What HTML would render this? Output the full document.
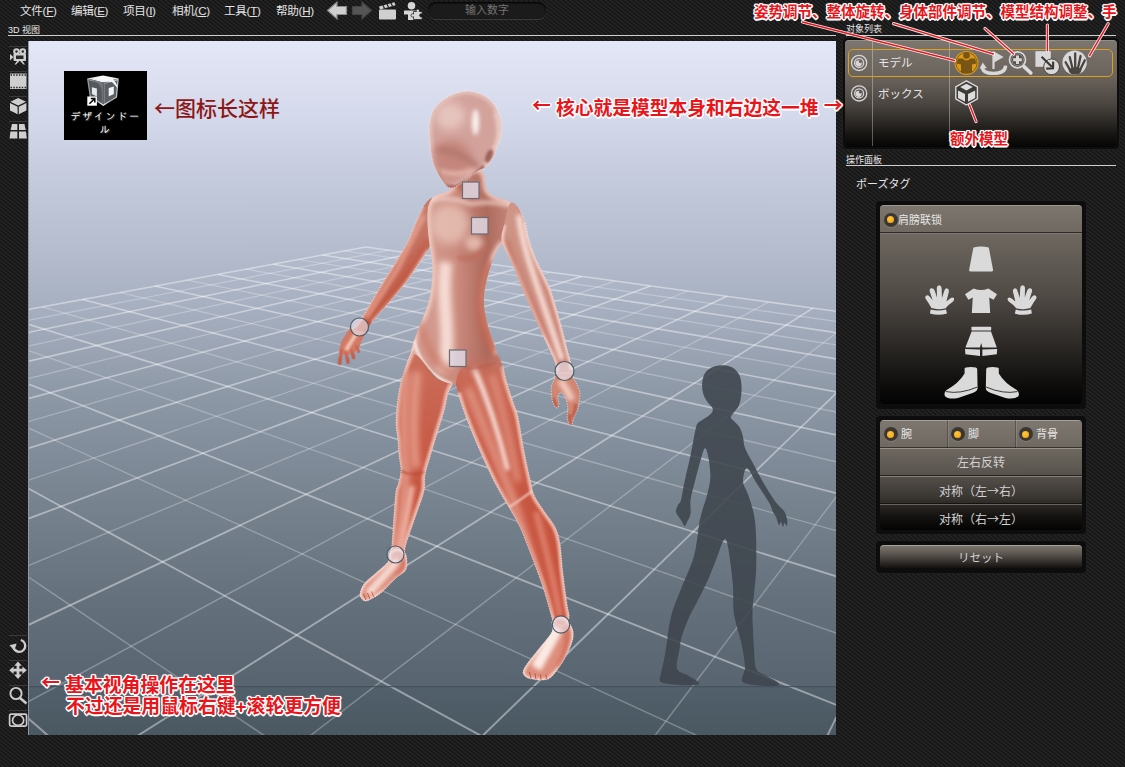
<!DOCTYPE html>
<html lang="zh">
<head>
<meta charset="utf-8">
<title>3D 视图</title>
<style>
html,body{margin:0;padding:0}
body{width:1125px;height:767px;overflow:hidden;position:relative;
 font-family:"Liberation Sans","Noto Sans CJK SC",sans-serif;
 background-color:#1b1b1b;}
.abs{position:absolute}
.menu{position:absolute;top:3px;height:16px;line-height:16px;font-size:11.6px;letter-spacing:-.3px;color:#e4e4e4;white-space:nowrap}
.menu u{text-decoration:underline}
.lbl{position:absolute;font-size:9px;color:#e8e8e8;line-height:10px;white-space:nowrap}
.hline{position:absolute;height:1px;background:#cfcfcf}
#vp{position:absolute;left:28px;top:41px;width:808px;height:694px;overflow:hidden;
 background:linear-gradient(to bottom,#e4e7f7 0px,#d3d8ea 80px,#c1c8da 150px,#b4bccd 210px,#a7b0c0 265px,#8e99a8 350px,#77838f 460px,#64717d 560px,#586571 645px,#52606b 646px,#4a5862 694px);}
#vp svg{position:absolute;left:0;top:0}
.gM{stroke:#fff;stroke-opacity:.42}
.gm{stroke:#fff;stroke-opacity:.27}
.red{position:absolute;color:#e9151b;font-weight:bold;white-space:nowrap;
 font-family:"Liberation Sans","Noto Sans CJK SC",sans-serif;
 text-shadow:-1px -1px 0 #fff,1px -1px 0 #fff,-1px 1px 0 #fff,1px 1px 0 #fff,0 -1.5px 0 #fff,0 1.5px 0 #fff,-1.5px 0 0 #fff,1.5px 0 0 #fff,0 0 2.5px #fff;}
.panel{position:absolute;border-radius:4px;}
.frame{position:absolute;background:#0d0d0d;border-radius:4px;box-shadow:0 0 0 1px #1f1f1f}
.btn{position:absolute;left:0;width:202px;text-align:center;color:#d2d2d2;font-size:12px;box-sizing:border-box;border-top:1px solid rgba(255,255,255,.28);border-bottom:1px solid rgba(0,0,0,.55)}
.radio{position:absolute;width:14px;height:14px;border-radius:50%;background:#3b3632;box-shadow:0 1px 0 rgba(255,255,255,.12)}
.radio:after{content:"";position:absolute;left:3.5px;top:3.5px;width:7px;height:7px;border-radius:50%;background:radial-gradient(circle at 40% 35%,#ffc63a,#f0a010)}
.ar{font-family:"Noto Sans CJK SC","Noto Sans CJK JP",sans-serif}
.red .ar{position:relative;top:-2px}
.ptxt{position:absolute;color:#e6e6e6;font-size:11px;line-height:14px;white-space:nowrap}
</style>
</head>
<body>
<svg class="abs" style="left:0;top:0" width="1125" height="767">
 <defs><pattern id="cf" width="5" height="4" patternUnits="userSpaceOnUse">
  <rect width="5" height="4" fill="#151515"/>
  <g stroke="#242424" stroke-width="1.55"><path d="M-5 -4L10 8"/><path d="M0 -4L15 8"/><path d="M-10 -4L5 8"/></g>
 </pattern></defs>
 <rect width="1125" height="767" fill="url(#cf)"/>
</svg>

<!-- ===== menu bar ===== -->
<div class="menu" style="left:20px">文件(<u>F</u>)</div>
<div class="menu" style="left:71px">编辑(<u>E</u>)</div>
<div class="menu" style="left:123px">项目(<u>I</u>)</div>
<div class="menu" style="left:172px">相机(<u>C</u>)</div>
<div class="menu" style="left:224px">工具(<u>T</u>)</div>
<div class="menu" style="left:276px">帮助(<u>H</u>)</div>

<!-- toolbar icons -->
<svg class="abs" style="left:324px;top:0" width="104" height="22" viewBox="324 0 104 22">
 <path d="M327.5 10.5 L337 2 L337 6.5 L346.5 6.5 L346.5 14.5 L337 14.5 L337 19 Z" fill="#cfcfcf" stroke="#8a8a8a" stroke-width="1.2"/>
 <path d="M371.5 10.5 L362 2 L362 6.5 L352.5 6.5 L352.5 14.5 L362 14.5 L362 19 Z" fill="#555" stroke="#444" stroke-width="1.2"/>
 <g fill="#d0d0d0">
  <path d="M379 6.5 L394.5 2.2 L395.5 5.2 L380 9.5 Z"/>
  <rect x="379" y="9.5" width="17" height="10" rx="1"/>
 </g>
 <g stroke="#222" stroke-width="1.2"><line x1="383" y1="5.2" x2="384.5" y2="8.4"/><line x1="387" y1="4.1" x2="388.5" y2="7.3"/><line x1="391" y1="3" x2="392.5" y2="6.2"/></g>
 <g fill="#d6d6d6">
  <circle cx="411.5" cy="5.8" r="3.8"/>
  <path d="M404 10.5 h15 v4 h-4.5 v5.5 h-6.5 v-5.5 h-4 Z"/>
  <path d="M413.5 11.5 h3 a1.6 1.6 0 1 1 2.6 0 h3 v2.6 a1.6 1.6 0 1 0 0 2.6 v2.8 h-8.6 v-2.8 a1.6 1.6 0 1 1 0 -2.6 Z" stroke="#222" stroke-width=".8"/>
 </g>
</svg>
<div class="abs" style="left:428px;top:2px;width:118px;height:17px;border-radius:8px;background:#1b1b1b;box-shadow:inset 0 1px 2px #000,0 1px 0 #3a3a3a;color:#747474;font-size:11px;line-height:17px;text-align:center">输入数字</div>

<!-- 3D view label -->
<div class="lbl" style="left:8px;top:25px">3D 视图</div>
<div class="hline" style="left:8px;top:35px;width:828px"></div>

<!-- ===== viewport ===== -->
<div id="vp">
<svg width="808" height="694" viewBox="28 41 808 694">
 <defs>
  <filter id="b1" filterUnits="userSpaceOnUse" x="28" y="41" width="808" height="694"><feGaussianBlur stdDeviation="1"/></filter>
  <filter id="b2" filterUnits="userSpaceOnUse" x="28" y="41" width="808" height="694"><feGaussianBlur stdDeviation="2"/></filter>
  <filter id="b3" filterUnits="userSpaceOnUse" x="28" y="41" width="808" height="694"><feGaussianBlur stdDeviation="3.2"/></filter>
  <filter id="b5" filterUnits="userSpaceOnUse" x="28" y="41" width="808" height="694"><feGaussianBlur stdDeviation="5"/></filter>
  <linearGradient id="skin" gradientUnits="userSpaceOnUse" x1="0" y1="190" x2="0" y2="640">
   <stop offset="0" stop-color="#d09c90"/><stop offset=".2" stop-color="#cc8575"/><stop offset=".4" stop-color="#c96b58"/><stop offset=".6" stop-color="#c75843"/><stop offset="1" stop-color="#c6503a"/>
  </linearGradient>
  <linearGradient id="torsoG" gradientUnits="userSpaceOnUse" x1="415" y1="0" x2="505" y2="0">
   <stop offset="0" stop-color="#d6a399"/><stop offset=".45" stop-color="#cc8c7f"/><stop offset=".8" stop-color="#ad6a5d"/><stop offset="1" stop-color="#c08072"/>
  </linearGradient>
  <linearGradient id="fadeR" gradientUnits="userSpaceOnUse" x1="0" y1="352" x2="0" y2="376"><stop offset="0" stop-color="#000"/><stop offset="1" stop-color="#fff"/></linearGradient>
  <mask id="mR" maskUnits="userSpaceOnUse" x="28" y="41" width="808" height="694"><rect x="28" y="41" width="808" height="694" fill="url(#fadeR)"/></mask>
  <linearGradient id="larmG" gradientUnits="userSpaceOnUse" x1="428" y1="210" x2="360" y2="326"><stop offset="0" stop-color="#c67b6c"/><stop offset=".5" stop-color="#c2624f"/><stop offset="1" stop-color="#bf5540"/></linearGradient>
  <linearGradient id="rarmG" gradientUnits="userSpaceOnUse" x1="512" y1="210" x2="562" y2="366"><stop offset="0" stop-color="#cf9688"/><stop offset="1" stop-color="#c67c6d"/></linearGradient>
  <clipPath id="cHead"><path d="M465.7 91.0C471.4 90.5 477.0 92.3 481.4 94.1C485.8 95.9 489.3 98.5 492.3 101.9C495.3 105.3 497.8 110.2 499.4 114.4C501.0 118.6 501.6 122.8 501.7 127.0C501.8 131.2 501.1 135.8 500.2 139.5C499.3 143.2 497.2 146.2 496.2 149.0C495.1 151.8 495.6 153.0 493.9 156.0C492.2 159.0 488.6 164.5 486.0 167.0C483.4 169.5 481.6 168.6 478.2 170.8C474.8 173.0 469.6 177.5 465.7 180.2C461.8 182.9 457.4 185.9 454.8 187.2C452.2 188.5 451.6 188.4 450.0 188.0C448.4 187.6 447.2 187.0 445.4 184.9C443.6 182.8 441.0 178.9 439.0 175.5C437.0 172.1 435.0 168.7 433.6 164.5C432.2 160.3 431.3 155.6 430.5 150.4C429.7 145.2 429.1 138.1 429.0 133.2C428.9 128.2 428.8 124.9 429.7 120.7C430.6 116.5 431.5 112.1 434.4 108.2C437.3 104.3 441.8 100.1 447.0 97.2C452.2 94.3 460.0 91.5 465.7 91.0Z"/></clipPath>
  <clipPath id="cTorso"><path d="M456.0 184.0C452.2 187.7 450.3 190.2 447.0 192.0C443.7 193.8 438.7 193.7 436.0 195.0C433.3 196.3 432.3 197.8 431.0 200.0C429.7 202.2 428.6 204.3 428.0 208.0C427.4 211.7 427.4 217.3 427.5 222.0C427.6 226.7 428.1 231.7 428.5 236.0C428.9 240.3 429.3 242.7 430.0 248.0C430.7 253.3 432.2 261.7 432.5 268.0C432.8 274.3 432.1 280.5 431.5 286.0C430.9 291.5 430.2 296.2 429.0 301.0C427.8 305.8 425.8 310.2 424.0 315.0C422.2 319.8 419.8 325.2 418.0 330.0C416.2 334.8 414.1 340.3 413.0 344.0C411.9 347.7 410.5 349.8 411.5 352.0C412.5 354.2 416.1 354.2 419.0 357.0C421.9 359.8 425.7 365.3 429.0 369.0C432.3 372.7 435.2 376.5 439.0 379.0C442.8 381.5 446.8 382.5 452.0 384.0C457.2 385.5 462.3 387.5 470.0 388.0C477.7 388.5 492.1 388.3 498.0 387.0C503.9 385.7 504.7 383.2 505.5 380.0C506.3 376.8 504.3 372.3 503.0 368.0C501.7 363.7 499.3 359.0 497.5 354.0C495.7 349.0 493.9 344.0 492.0 338.0C490.1 332.0 487.3 325.0 486.0 318.0C484.7 311.0 483.3 304.3 484.0 296.0C484.7 287.7 487.3 276.3 490.0 268.0C492.7 259.7 496.3 250.7 500.0 246.0C503.7 241.3 508.3 243.0 512.0 240.0C515.7 237.0 520.7 232.2 522.0 228.0C523.3 223.8 522.0 219.3 520.0 215.0C518.0 210.7 514.0 205.0 510.0 202.0C506.0 199.0 499.8 199.0 496.0 197.0C492.2 195.0 489.2 194.2 487.0 190.0C484.8 185.8 485.8 175.3 483.0 172.0C480.2 168.7 474.5 168.0 470.0 170.0C465.5 172.0 459.8 180.3 456.0 184.0Z"/></clipPath>
  <clipPath id="cLarm"><path d="M431.0 198.0C429.0 198.7 425.4 203.2 423.0 207.0C420.6 210.8 419.0 215.3 416.5 221.0C414.0 226.7 411.2 234.5 408.0 241.0C404.8 247.5 401.3 252.8 397.0 260.0C392.7 267.2 387.7 274.7 382.0 284.0C376.3 293.3 367.7 308.7 363.0 316.0C358.3 323.3 356.0 325.0 354.0 328.0C352.0 331.0 350.3 332.3 351.0 334.0C351.7 335.7 355.7 337.8 358.0 338.0C360.3 338.2 362.7 337.7 365.0 335.0C367.3 332.3 367.5 328.0 372.0 322.0C376.5 316.0 386.2 305.8 392.0 299.0C397.8 292.2 402.3 287.2 407.0 281.0C411.7 274.8 416.5 267.2 420.0 262.0C423.5 256.8 425.8 254.3 428.0 250.0C430.2 245.7 431.8 241.8 433.0 236.0C434.2 230.2 434.7 220.5 435.0 215.0C435.3 209.5 435.7 205.8 435.0 203.0C434.3 200.2 433.0 197.3 431.0 198.0Z"/></clipPath>
  <clipPath id="cRarm"><path d="M510.0 203.0C507.5 205.8 505.3 218.5 504.0 225.0C502.7 231.5 500.3 234.8 502.0 242.0C503.7 249.2 509.7 258.0 514.0 268.0C518.3 278.0 523.3 291.0 528.0 302.0C532.7 313.0 537.7 324.3 542.0 334.0C546.3 343.7 551.5 353.7 554.0 360.0C556.5 366.3 556.0 368.7 557.0 372.0C558.0 375.3 558.0 378.7 560.0 380.0C562.0 381.3 567.0 381.7 569.0 380.0C571.0 378.3 571.8 373.3 572.0 370.0C572.2 366.7 571.0 364.2 570.0 360.0C569.0 355.8 567.4 350.5 566.0 345.0C564.6 339.5 563.2 333.2 561.5 327.0C559.8 320.8 557.8 314.2 556.0 308.0C554.2 301.8 552.5 295.3 550.5 290.0C548.5 284.7 546.5 281.3 544.0 276.0C541.5 270.7 538.0 264.0 535.5 258.0C533.0 252.0 530.8 246.0 529.0 240.0C527.2 234.0 526.7 227.3 525.0 222.0C523.3 216.7 521.5 211.2 519.0 208.0C516.5 204.8 512.5 200.2 510.0 203.0Z"/></clipPath>
  <clipPath id="cLleg"><path d="M413.0 349.0C410.7 351.3 407.3 361.8 405.0 369.0C402.7 376.2 400.5 383.3 399.0 392.0C397.5 400.7 396.2 413.0 396.0 421.0C395.8 429.0 397.5 434.3 398.0 440.0C398.5 445.7 398.5 449.8 399.0 455.0C399.5 460.2 401.2 466.0 401.0 471.0C400.8 476.0 398.8 481.7 398.0 485.0C397.2 488.3 396.7 486.0 396.0 491.0C395.3 496.0 394.7 506.2 394.0 515.0C393.3 523.8 392.7 537.2 392.0 544.0C391.3 550.8 389.3 553.0 390.0 556.0C390.7 559.0 393.8 561.7 396.0 562.0C398.2 562.3 401.3 561.0 403.0 558.0C404.7 555.0 403.8 551.2 406.0 544.0C408.2 536.8 413.0 523.8 416.0 515.0C419.0 506.2 422.5 497.7 424.0 491.0C425.5 484.3 424.0 480.7 425.0 475.0C426.0 469.3 428.2 463.3 430.0 457.0C431.8 450.7 433.7 444.7 436.0 437.0C438.3 429.3 442.0 418.3 444.0 411.0C446.0 403.7 446.7 397.5 448.0 393.0C449.3 388.5 453.7 386.3 452.0 384.0C450.3 381.7 441.8 381.5 438.0 379.0C434.2 376.5 432.2 373.0 429.0 369.0C425.8 365.0 421.7 358.3 419.0 355.0C416.3 351.7 415.3 346.7 413.0 349.0Z"/></clipPath>
  <clipPath id="cRleg"><path d="M456.0 381.0C456.5 376.8 458.7 371.8 461.0 368.0C463.3 364.2 466.2 361.0 470.0 358.0C473.8 355.0 479.5 351.5 484.0 350.0C488.5 348.5 493.8 346.3 497.0 349.0C500.2 351.7 501.5 360.8 503.0 366.0C504.5 371.2 504.3 374.0 506.0 380.0C507.7 386.0 511.0 395.8 513.0 402.0C515.0 408.2 516.2 408.8 518.0 417.0C519.8 425.2 522.0 440.7 524.0 451.0C526.0 461.3 528.3 471.7 530.0 479.0C531.7 486.3 531.7 489.7 534.0 495.0C536.3 500.3 540.5 505.7 544.0 511.0C547.5 516.3 552.3 521.5 555.0 527.0C557.7 532.5 558.7 536.2 560.0 544.0C561.3 551.8 561.8 564.0 563.0 574.0C564.2 584.0 566.0 596.7 567.0 604.0C568.0 611.3 569.8 614.3 569.0 618.0C568.2 621.7 564.7 625.7 562.0 626.0C559.3 626.3 554.7 621.3 553.0 620.0C551.3 618.7 553.8 624.0 552.0 618.0C550.2 612.0 546.2 596.3 542.0 584.0C537.8 571.7 530.7 553.5 527.0 544.0C523.3 534.5 522.8 532.8 520.0 527.0C517.2 521.2 514.0 516.0 510.0 509.0C506.0 502.0 501.0 494.7 496.0 485.0C491.0 475.3 485.0 462.3 480.0 451.0C475.0 439.7 469.7 426.7 466.0 417.0C462.3 407.3 459.7 399.0 458.0 393.0C456.3 387.0 455.5 385.2 456.0 381.0Z"/></clipPath>
  <clipPath id="cLfoot"><path d="M390.0 553.0C388.5 555.2 390.3 558.7 388.0 562.0C385.7 565.3 380.0 569.3 376.0 573.0C372.0 576.7 366.7 580.5 364.0 584.0C361.3 587.5 360.3 591.5 360.0 594.0C359.7 596.5 361.0 597.8 362.0 599.0C363.0 600.2 364.2 601.2 366.0 601.0C367.8 600.8 370.3 599.5 373.0 598.0C375.7 596.5 378.2 595.3 382.0 592.0C385.8 588.7 392.2 581.5 396.0 578.0C399.8 574.5 403.2 573.5 405.0 571.0C406.8 568.5 407.0 566.0 407.0 563.0C407.0 560.0 406.7 555.3 405.0 553.0C403.3 550.7 399.5 549.0 397.0 549.0C394.5 549.0 391.5 550.8 390.0 553.0Z"/></clipPath>
  <clipPath id="cRfoot"><path d="M552.0 622.0C551.0 624.5 554.3 627.3 552.0 632.0C549.7 636.7 542.2 644.7 538.0 650.0C533.8 655.3 529.5 660.3 527.0 664.0C524.5 667.7 523.2 669.8 523.0 672.0C522.8 674.2 524.5 675.8 526.0 677.0C527.5 678.2 529.5 678.5 532.0 679.0C534.5 679.5 538.0 680.2 541.0 680.0C544.0 679.8 546.8 680.3 550.0 678.0C553.2 675.7 557.0 670.3 560.0 666.0C563.0 661.7 565.8 656.7 568.0 652.0C570.2 647.3 572.3 642.0 573.0 638.0C573.7 634.0 573.2 631.2 572.0 628.0C570.8 624.8 568.3 620.8 566.0 619.0C563.7 617.2 560.3 616.5 558.0 617.0C555.7 617.5 553.0 619.5 552.0 622.0Z"/></clipPath>
  <clipPath id="cLhand"><path d="M352.0 331.0C348.4 332.4 343.7 339.3 341.4 343.3C339.1 347.3 338.6 351.6 338.2 355.2C337.8 358.8 338.2 363.8 338.7 365.2C339.2 366.6 340.1 365.1 341.0 363.4C341.9 361.7 343.1 355.9 343.8 355.0C344.6 354.1 344.8 356.4 345.5 358.0C346.2 359.6 347.1 363.9 347.8 364.3C348.5 364.8 349.5 362.4 349.8 360.7C350.1 359.0 349.2 355.1 349.5 354.3C349.8 353.5 350.9 355.1 351.5 356.0C352.1 356.9 352.7 359.8 353.3 359.8C353.9 359.8 354.9 357.5 355.2 356.0C355.5 354.5 354.9 351.2 355.4 350.6C355.9 350.0 357.3 352.1 358.0 352.5C358.7 352.9 359.1 353.8 359.4 353.2C359.7 352.6 359.8 350.4 359.7 349.0C359.6 347.6 358.4 346.3 358.5 345.0C358.6 343.7 359.8 342.7 360.5 341.0C361.2 339.3 364.4 336.7 363.0 335.0C361.6 333.3 355.6 329.6 352.0 331.0Z"/></clipPath>
  <clipPath id="cRhand"><path d="M556.0 374.0C553.3 374.8 555.6 375.8 554.9 377.7C554.2 379.6 552.2 383.3 551.6 385.5C551.0 387.7 551.2 389.1 551.2 391.0C551.2 392.9 551.4 394.8 551.6 396.6C551.9 398.5 552.1 400.3 552.7 402.1C553.4 403.9 554.6 406.8 555.5 407.6C556.4 408.4 557.7 408.0 558.2 407.1C558.8 406.2 558.9 403.9 558.8 402.1C558.7 400.4 557.3 398.2 557.7 396.6C558.1 395.0 559.7 392.5 561.0 392.7C562.3 392.9 564.4 395.2 565.5 397.7C566.6 400.2 567.4 404.5 567.7 407.6C568.0 410.7 567.1 414.2 567.1 416.5C567.1 418.8 567.5 420.0 568.0 421.5C568.5 423.0 569.2 424.9 569.9 425.4C570.6 425.9 571.4 425.8 572.1 424.3C572.8 422.8 573.4 418.9 574.3 416.5C575.2 414.1 576.8 412.5 577.6 409.9C578.4 407.3 578.9 404.0 579.3 401.0C579.7 398.0 580.4 395.1 579.9 392.1C579.4 389.2 577.6 385.7 576.5 383.3C575.4 380.9 574.1 379.4 573.2 377.7C572.3 376.0 573.9 373.6 571.0 373.0C568.1 372.4 558.7 373.2 556.0 374.0Z"/></clipPath>
 </defs>
 <!-- grid -->
 <g>
<path d="M365.9 247.0L414.6 253.7" class="gM" stroke-width="1.53"/>
<path d="M414.6 253.7L468.5 261.1" class="gM" stroke-width="1.54"/>
<path d="M468.5 261.1L528.1 269.2" class="gM" stroke-width="1.55"/>
<path d="M528.1 269.2L593.6 278.1" class="gM" stroke-width="1.56"/>
<path d="M593.6 278.1L667.4 288.2" class="gM" stroke-width="1.56"/>
<path d="M667.4 288.2L750.3 299.5" class="gM" stroke-width="1.57"/>
<path d="M750.3 299.5L844.1 312.4" class="gM" stroke-width="1.59"/>
<path d="M365.9 247.0L330.4 253.6" class="gM" stroke-width="1.53"/>
<path d="M330.4 253.6L291.4 260.8" class="gM" stroke-width="1.54"/>
<path d="M291.4 260.8L248.5 268.8" class="gM" stroke-width="1.55"/>
<path d="M248.5 268.8L200.9 277.6" class="gM" stroke-width="1.56"/>
<path d="M200.9 277.6L147.9 287.4" class="gM" stroke-width="1.56"/>
<path d="M147.9 287.4L88.5 298.4" class="gM" stroke-width="1.57"/>
<path d="M88.5 298.4L20.6 310.9" class="gM" stroke-width="1.58"/>
<path d="M344.7 251.0L394.7 258.1" class="gm" stroke-width="1.20"/>
<path d="M394.7 258.1L449.9 266.1" class="gm" stroke-width="1.20"/>
<path d="M449.9 266.1L511.7 274.9" class="gm" stroke-width="1.21"/>
<path d="M511.7 274.9L580.0 284.7" class="gm" stroke-width="1.22"/>
<path d="M580.0 284.7L657.5 295.8" class="gm" stroke-width="1.22"/>
<path d="M657.5 295.8L744.3 308.2" class="gm" stroke-width="1.23"/>
<path d="M744.3 308.2L844.2 322.6" class="gm" stroke-width="1.24"/>
<path d="M388.8 250.2L352.1 257.3" class="gm" stroke-width="1.20"/>
<path d="M352.1 257.3L311.2 265.3" class="gm" stroke-width="1.20"/>
<path d="M311.2 265.3L265.8 274.1" class="gm" stroke-width="1.21"/>
<path d="M265.8 274.1L215.7 283.9" class="gm" stroke-width="1.22"/>
<path d="M215.7 283.9L158.7 295.0" class="gm" stroke-width="1.22"/>
<path d="M158.7 295.0L94.2 307.6" class="gm" stroke-width="1.23"/>
<path d="M94.2 307.6L20.5 321.9" class="gm" stroke-width="1.24"/>
<path d="M322.2 255.1L373.6 262.9" class="gM" stroke-width="1.54"/>
<path d="M373.6 262.9L430.5 271.5" class="gM" stroke-width="1.55"/>
<path d="M430.5 271.5L494.1 281.0" class="gM" stroke-width="1.56"/>
<path d="M494.1 281.0L565.4 291.8" class="gM" stroke-width="1.57"/>
<path d="M565.4 291.8L645.9 303.9" class="gM" stroke-width="1.58"/>
<path d="M645.9 303.9L737.7 317.8" class="gM" stroke-width="1.59"/>
<path d="M737.7 317.8L844.2 333.8" class="gM" stroke-width="1.60"/>
<path d="M412.6 253.4L374.5 261.3" class="gM" stroke-width="1.54"/>
<path d="M374.5 261.3L332.2 270.0" class="gM" stroke-width="1.55"/>
<path d="M332.2 270.0L284.8 279.7" class="gM" stroke-width="1.56"/>
<path d="M284.8 279.7L230.9 290.8" class="gM" stroke-width="1.57"/>
<path d="M230.9 290.8L170.4 303.3" class="gM" stroke-width="1.58"/>
<path d="M170.4 303.3L101.2 317.5" class="gM" stroke-width="1.59"/>
<path d="M101.2 317.5L20.3 334.1" class="gM" stroke-width="1.60"/>
<path d="M298.4 259.5L350.6 267.8" class="gm" stroke-width="1.21"/>
<path d="M350.6 267.8L409.3 277.2" class="gm" stroke-width="1.21"/>
<path d="M409.3 277.2L475.1 287.6" class="gm" stroke-width="1.22"/>
<path d="M475.1 287.6L549.5 299.4" class="gm" stroke-width="1.23"/>
<path d="M549.5 299.4L634.1 312.9" class="gm" stroke-width="1.23"/>
<path d="M634.1 312.9L731.4 328.4" class="gm" stroke-width="1.24"/>
<path d="M731.4 328.4L844.3 346.3" class="gm" stroke-width="1.25"/>
<path d="M437.5 256.8L398.5 265.3" class="gm" stroke-width="1.20"/>
<path d="M398.5 265.3L354.4 274.9" class="gm" stroke-width="1.21"/>
<path d="M354.4 274.9L304.6 285.8" class="gm" stroke-width="1.22"/>
<path d="M304.6 285.8L248.1 298.1" class="gm" stroke-width="1.22"/>
<path d="M248.1 298.1L183.2 312.3" class="gm" stroke-width="1.23"/>
<path d="M183.2 312.3L108.1 328.7" class="gm" stroke-width="1.24"/>
<path d="M108.1 328.7L20.1 347.8" class="gm" stroke-width="1.26"/>
<path d="M273.1 264.2L326.6 273.2" class="gM" stroke-width="1.55"/>
<path d="M326.6 273.2L387.1 283.4" class="gM" stroke-width="1.56"/>
<path d="M387.1 283.4L454.7 294.7" class="gM" stroke-width="1.57"/>
<path d="M454.7 294.7L532.3 307.8" class="gM" stroke-width="1.58"/>
<path d="M532.3 307.8L620.4 322.6" class="gM" stroke-width="1.59"/>
<path d="M620.4 322.6L723.4 339.9" class="gM" stroke-width="1.61"/>
<path d="M723.4 339.9L844.3 360.2" class="gM" stroke-width="1.63"/>
<path d="M463.6 260.4L423.4 269.7" class="gM" stroke-width="1.55"/>
<path d="M423.4 269.7L378.0 280.2" class="gM" stroke-width="1.56"/>
<path d="M378.0 280.2L326.4 292.2" class="gM" stroke-width="1.57"/>
<path d="M326.4 292.2L266.6 306.1" class="gM" stroke-width="1.58"/>
<path d="M266.6 306.1L198.0 322.0" class="gM" stroke-width="1.59"/>
<path d="M198.0 322.0L117.6 340.6" class="gM" stroke-width="1.61"/>
<path d="M117.6 340.6L21.0 363.0" class="gM" stroke-width="1.63"/>
<path d="M246.3 269.2L301.0 278.9" class="gm" stroke-width="1.21"/>
<path d="M301.0 278.9L362.7 289.9" class="gm" stroke-width="1.22"/>
<path d="M362.7 289.9L432.6 302.4" class="gm" stroke-width="1.23"/>
<path d="M432.6 302.4L513.5 316.8" class="gm" stroke-width="1.24"/>
<path d="M513.5 316.8L606.2 333.4" class="gm" stroke-width="1.25"/>
<path d="M606.2 333.4L714.6 352.7" class="gm" stroke-width="1.26"/>
<path d="M714.6 352.7L844.4 375.9" class="gm" stroke-width="1.27"/>
<path d="M491.0 264.1L450.1 274.2" class="gm" stroke-width="1.21"/>
<path d="M450.1 274.2L403.1 285.9" class="gm" stroke-width="1.22"/>
<path d="M403.1 285.9L349.3 299.2" class="gm" stroke-width="1.22"/>
<path d="M349.3 299.2L286.8 314.7" class="gm" stroke-width="1.23"/>
<path d="M286.8 314.7L213.5 332.8" class="gm" stroke-width="1.25"/>
<path d="M213.5 332.8L126.3 354.4" class="gm" stroke-width="1.26"/>
<path d="M126.3 354.4L20.8 380.5" class="gm" stroke-width="1.27"/>
<path d="M217.8 274.4L273.7 285.1" class="gM" stroke-width="1.56"/>
<path d="M273.7 285.1L337.0 297.1" class="gM" stroke-width="1.57"/>
<path d="M337.0 297.1L409.4 310.9" class="gM" stroke-width="1.58"/>
<path d="M409.4 310.9L493.0 326.7" class="gM" stroke-width="1.60"/>
<path d="M493.0 326.7L590.5 345.3" class="gM" stroke-width="1.61"/>
<path d="M590.5 345.3L705.9 367.2" class="gM" stroke-width="1.63"/>
<path d="M705.9 367.2L844.4 393.5" class="gM" stroke-width="1.65"/>
<path d="M519.7 268.0L477.9 279.2" class="gM" stroke-width="1.56"/>
<path d="M477.9 279.2L429.9 291.9" class="gM" stroke-width="1.57"/>
<path d="M429.9 291.9L373.9 306.8" class="gM" stroke-width="1.58"/>
<path d="M373.9 306.8L308.7 324.1" class="gM" stroke-width="1.59"/>
<path d="M308.7 324.1L230.6 344.8" class="gM" stroke-width="1.61"/>
<path d="M230.6 344.8L137.0 369.7" class="gM" stroke-width="1.63"/>
<path d="M137.0 369.7L20.6 400.6" class="gM" stroke-width="1.66"/>
<path d="M187.4 280.1L243.7 291.5" class="gm" stroke-width="1.22"/>
<path d="M243.7 291.5L308.6 304.7" class="gm" stroke-width="1.23"/>
<path d="M308.6 304.7L383.4 319.9" class="gm" stroke-width="1.24"/>
<path d="M383.4 319.9L469.6 337.5" class="gm" stroke-width="1.25"/>
<path d="M469.6 337.5L572.2 358.3" class="gm" stroke-width="1.26"/>
<path d="M572.2 358.3L694.9 383.3" class="gm" stroke-width="1.28"/>
<path d="M694.9 383.3L844.5 413.7" class="gm" stroke-width="1.30"/>
<path d="M549.9 272.2L507.3 284.3" class="gm" stroke-width="1.22"/>
<path d="M507.3 284.3L458.1 298.4" class="gm" stroke-width="1.22"/>
<path d="M458.1 298.4L400.4 315.0" class="gm" stroke-width="1.23"/>
<path d="M400.4 315.0L332.0 334.5" class="gm" stroke-width="1.25"/>
<path d="M332.0 334.5L249.5 358.2" class="gm" stroke-width="1.26"/>
<path d="M249.5 358.2L148.1 387.2" class="gm" stroke-width="1.28"/>
<path d="M148.1 387.2L20.4 423.8" class="gm" stroke-width="1.30"/>
<path d="M154.8 286.1L212.1 298.6" class="gM" stroke-width="1.57"/>
<path d="M212.1 298.6L277.9 313.0" class="gM" stroke-width="1.58"/>
<path d="M277.9 313.0L354.9 329.8" class="gM" stroke-width="1.60"/>
<path d="M354.9 329.8L444.7 349.4" class="gM" stroke-width="1.62"/>
<path d="M444.7 349.4L552.7 373.0" class="gM" stroke-width="1.64"/>
<path d="M552.7 373.0L682.5 401.4" class="gM" stroke-width="1.66"/>
<path d="M682.5 401.4L844.6 436.8" class="gM" stroke-width="1.69"/>
<path d="M581.6 276.5L539.0 289.7" class="gM" stroke-width="1.56"/>
<path d="M539.0 289.7L488.8 305.3" class="gM" stroke-width="1.58"/>
<path d="M488.8 305.3L429.9 323.6" class="gM" stroke-width="1.59"/>
<path d="M429.9 323.6L358.4 345.8" class="gM" stroke-width="1.61"/>
<path d="M358.4 345.8L271.6 372.8" class="gM" stroke-width="1.63"/>
<path d="M271.6 372.8L161.9 406.9" class="gM" stroke-width="1.66"/>
<path d="M161.9 406.9L20.1 450.9" class="gM" stroke-width="1.70"/>
<path d="M120.0 292.5L178.0 306.2" class="gm" stroke-width="1.23"/>
<path d="M178.0 306.2L245.1 322.1" class="gm" stroke-width="1.24"/>
<path d="M245.1 322.1L323.8 340.7" class="gm" stroke-width="1.25"/>
<path d="M323.8 340.7L417.1 362.7" class="gm" stroke-width="1.26"/>
<path d="M417.1 362.7L529.8 389.4" class="gm" stroke-width="1.28"/>
<path d="M529.8 389.4L668.4 422.1" class="gm" stroke-width="1.30"/>
<path d="M668.4 422.1L844.7 463.8" class="gm" stroke-width="1.32"/>
<path d="M615.0 281.1L572.2 295.6" class="gm" stroke-width="1.22"/>
<path d="M572.2 295.6L521.7 312.7" class="gm" stroke-width="1.23"/>
<path d="M521.7 312.7L461.3 333.3" class="gm" stroke-width="1.24"/>
<path d="M461.3 333.3L387.5 358.3" class="gm" stroke-width="1.26"/>
<path d="M387.5 358.3L295.5 389.5" class="gm" stroke-width="1.28"/>
<path d="M295.5 389.5L177.8 429.5" class="gm" stroke-width="1.30"/>
<path d="M177.8 429.5L21.4 482.6" class="gm" stroke-width="1.33"/>
<path d="M82.6 299.5L140.5 314.4" class="gM" stroke-width="1.59"/>
<path d="M140.5 314.4L208.8 331.9" class="gM" stroke-width="1.60"/>
<path d="M208.8 331.9L289.4 352.6" class="gM" stroke-width="1.62"/>
<path d="M289.4 352.6L386.4 377.6" class="gM" stroke-width="1.64"/>
<path d="M386.4 377.6L505.0 408.1" class="gM" stroke-width="1.66"/>
<path d="M505.0 408.1L653.5 446.2" class="gM" stroke-width="1.70"/>
<path d="M653.5 446.2L844.8 495.4" class="gM" stroke-width="1.74"/>
<path d="M650.3 285.9L608.0 301.7" class="gM" stroke-width="1.57"/>
<path d="M608.0 301.7L557.2 320.7" class="gM" stroke-width="1.59"/>
<path d="M557.2 320.7L496.1 343.6" class="gM" stroke-width="1.61"/>
<path d="M496.1 343.6L419.8 372.1" class="gM" stroke-width="1.63"/>
<path d="M419.8 372.1L323.6 408.1" class="gM" stroke-width="1.66"/>
<path d="M323.6 408.1L196.2 455.8" class="gM" stroke-width="1.70"/>
<path d="M196.2 455.8L21.2 521.3" class="gM" stroke-width="1.75"/>
<path d="M42.3 306.9L100.5 323.3" class="gm" stroke-width="1.24"/>
<path d="M100.5 323.3L169.5 342.8" class="gm" stroke-width="1.25"/>
<path d="M169.5 342.8L251.4 365.9" class="gm" stroke-width="1.27"/>
<path d="M251.4 365.9L351.8 394.2" class="gm" stroke-width="1.28"/>
<path d="M351.8 394.2L475.6 429.1" class="gm" stroke-width="1.30"/>
<path d="M475.6 429.1L634.7 474.0" class="gm" stroke-width="1.33"/>
<path d="M634.7 474.0L845.0 533.2" class="gm" stroke-width="1.36"/>
<path d="M687.5 291.0L645.8 308.3" class="gm" stroke-width="1.23"/>
<path d="M645.8 308.3L595.5 329.3" class="gm" stroke-width="1.24"/>
<path d="M595.5 329.3L533.7 355.1" class="gm" stroke-width="1.26"/>
<path d="M533.7 355.1L455.8 387.6" class="gm" stroke-width="1.28"/>
<path d="M455.8 387.6L354.6 429.8" class="gm" stroke-width="1.30"/>
<path d="M354.6 429.8L217.8 486.8" class="gm" stroke-width="1.33"/>
<path d="M217.8 486.8L20.9 568.8" class="gm" stroke-width="1.38"/>
<path d="M20.4 321.7L78.6 339.9" class="gM" stroke-width="1.61"/>
<path d="M78.6 339.9L147.5 361.4" class="gM" stroke-width="1.63"/>
<path d="M147.5 361.4L230.2 387.2" class="gM" stroke-width="1.65"/>
<path d="M230.2 387.2L331.6 418.8" class="gM" stroke-width="1.67"/>
<path d="M331.6 418.8L458.5 458.5" class="gM" stroke-width="1.71"/>
<path d="M458.5 458.5L622.0 509.5" class="gM" stroke-width="1.75"/>
<path d="M622.0 509.5L843.0 578.5" class="gM" stroke-width="1.80"/>
<path d="M726.9 296.3L686.6 315.3" class="gM" stroke-width="1.58"/>
<path d="M686.6 315.3L637.0 338.6" class="gM" stroke-width="1.60"/>
<path d="M637.0 338.6L575.1 367.8" class="gM" stroke-width="1.63"/>
<path d="M575.1 367.8L496.2 404.9" class="gM" stroke-width="1.66"/>
<path d="M496.2 404.9L390.3 454.7" class="gM" stroke-width="1.70"/>
<path d="M390.3 454.7L242.3 524.3" class="gM" stroke-width="1.75"/>
<path d="M242.3 524.3L20.6 628.6" class="gM" stroke-width="1.83"/>
<path d="M20.1 347.6L78.0 367.9" class="gm" stroke-width="1.27"/>
<path d="M78.0 367.9L147.3 392.1" class="gm" stroke-width="1.28"/>
<path d="M147.3 392.1L229.7 420.9" class="gm" stroke-width="1.30"/>
<path d="M229.7 420.9L331.5 456.5" class="gm" stroke-width="1.32"/>
<path d="M331.5 456.5L457.9 500.7" class="gm" stroke-width="1.35"/>
<path d="M457.9 500.7L622.4 558.2" class="gm" stroke-width="1.38"/>
<path d="M622.4 558.2L842.9 635.3" class="gm" stroke-width="1.43"/>
<path d="M768.6 302.0L730.0 322.9" class="gm" stroke-width="1.24"/>
<path d="M730.0 322.9L682.1 348.7" class="gm" stroke-width="1.25"/>
<path d="M682.1 348.7L621.4 381.5" class="gm" stroke-width="1.27"/>
<path d="M621.4 381.5L541.1 424.9" class="gm" stroke-width="1.30"/>
<path d="M541.1 424.9L432.0 483.8" class="gm" stroke-width="1.33"/>
<path d="M432.0 483.8L273.6 569.3" class="gm" stroke-width="1.38"/>
<path d="M273.6 569.3L20.2 706.1" class="gm" stroke-width="1.45"/>
<path d="M20.3 380.7L78.0 403.7" class="gM" stroke-width="1.66"/>
<path d="M78.0 403.7L147.0 431.1" class="gM" stroke-width="1.69"/>
<path d="M147.0 431.1L229.9 464.0" class="gM" stroke-width="1.72"/>
<path d="M229.9 464.0L331.4 504.4" class="gM" stroke-width="1.75"/>
<path d="M331.4 504.4L458.7 554.9" class="gM" stroke-width="1.79"/>
<path d="M458.7 554.9L623.0 620.2" class="gM" stroke-width="1.84"/>
<path d="M623.0 620.2L842.9 707.5" class="gM" stroke-width="1.91"/>
<path d="M812.9 308.1L778.4 330.0" class="gM" stroke-width="1.60"/>
<path d="M778.4 330.0L735.6 357.1" class="gM" stroke-width="1.62"/>
<path d="M735.6 357.1L680.9 391.7" class="gM" stroke-width="1.65"/>
<path d="M680.9 391.7L608.3 437.7" class="gM" stroke-width="1.68"/>
<path d="M608.3 437.7L508.7 500.8" class="gM" stroke-width="1.73"/>
<path d="M508.7 500.8L362.7 593.3" class="gM" stroke-width="1.80"/>
<path d="M362.7 593.3L125.0 743.8" class="gM" stroke-width="1.91"/>
<path d="M20.5 424.4L74.0 449.0" class="gm" stroke-width="1.32"/>
<path d="M74.0 449.0L136.4 477.7" class="gm" stroke-width="1.34"/>
<path d="M136.4 477.7L210.2 511.6" class="gm" stroke-width="1.36"/>
<path d="M210.2 511.6L298.7 552.3" class="gm" stroke-width="1.38"/>
<path d="M298.7 552.3L407.0 602.1" class="gm" stroke-width="1.41"/>
<path d="M407.0 602.1L542.4 664.4" class="gm" stroke-width="1.45"/>
<path d="M542.4 664.4L716.6 744.6" class="gm" stroke-width="1.50"/>
<path d="M844.9 326.1L815.2 348.9" class="gm" stroke-width="1.25"/>
<path d="M815.2 348.9L778.7 376.8" class="gm" stroke-width="1.27"/>
<path d="M778.7 376.8L732.7 412.0" class="gm" stroke-width="1.29"/>
<path d="M732.7 412.0L673.1 457.7" class="gm" stroke-width="1.32"/>
<path d="M673.1 457.7L592.7 519.3" class="gm" stroke-width="1.35"/>
<path d="M592.7 519.3L478.1 607.1" class="gm" stroke-width="1.40"/>
<path d="M478.1 607.1L300.0 743.5" class="gm" stroke-width="1.47"/>
<path d="M20.0 484.0L62.2 507.0" class="gM" stroke-width="1.76"/>
<path d="M62.2 507.0L110.9 533.6" class="gM" stroke-width="1.78"/>
<path d="M110.9 533.6L166.5 564.0" class="gM" stroke-width="1.81"/>
<path d="M166.5 564.0L229.2 598.2" class="gM" stroke-width="1.84"/>
<path d="M229.2 598.2L303.6 638.9" class="gM" stroke-width="1.87"/>
<path d="M303.6 638.9L391.4 686.8" class="gM" stroke-width="1.91"/>
<path d="M391.4 686.8L496.5 744.2" class="gM" stroke-width="1.96"/>
<path d="M845.0 384.6L820.0 408.8" class="gM" stroke-width="1.67"/>
<path d="M820.0 408.8L789.9 438.0" class="gM" stroke-width="1.69"/>
<path d="M789.9 438.0L753.3 473.4" class="gM" stroke-width="1.72"/>
<path d="M753.3 473.4L708.7 516.6" class="gM" stroke-width="1.76"/>
<path d="M708.7 516.6L651.4 572.1" class="gM" stroke-width="1.80"/>
<path d="M651.4 572.1L576.2 645.0" class="gM" stroke-width="1.86"/>
<path d="M576.2 645.0L473.3 744.7" class="gM" stroke-width="1.94"/>
<path d="M20.3 571.6L47.9 590.1" class="gm" stroke-width="1.42"/>
<path d="M47.9 590.1L77.6 610.1" class="gm" stroke-width="1.43"/>
<path d="M77.6 610.1L110.0 631.8" class="gm" stroke-width="1.44"/>
<path d="M110.0 631.8L146.6 656.5" class="gm" stroke-width="1.46"/>
<path d="M146.6 656.5L185.3 682.5" class="gm" stroke-width="1.48"/>
<path d="M185.3 682.5L227.9 711.1" class="gm" stroke-width="1.49"/>
<path d="M227.9 711.1L276.7 743.9" class="gm" stroke-width="1.51"/>
<path d="M844.8 485.6L827.1 508.9" class="gm" stroke-width="1.36"/>
<path d="M827.1 508.9L807.0 535.3" class="gm" stroke-width="1.38"/>
<path d="M807.0 535.3L784.2 565.4" class="gm" stroke-width="1.40"/>
<path d="M784.2 565.4L757.9 600.1" class="gm" stroke-width="1.42"/>
<path d="M757.9 600.1L727.3 640.4" class="gm" stroke-width="1.44"/>
<path d="M727.3 640.4L691.3 687.8" class="gm" stroke-width="1.47"/>
<path d="M691.3 687.8L648.3 744.4" class="gm" stroke-width="1.51"/>
<path d="M20.8 711.9L26.0 716.4" class="gM" stroke-width="1.96"/>
<path d="M26.0 716.4L31.2 720.9" class="gM" stroke-width="1.97"/>
<path d="M31.2 720.9L36.5 725.6" class="gM" stroke-width="1.97"/>
<path d="M36.5 725.6L41.9 730.3" class="gM" stroke-width="1.97"/>
<path d="M41.9 730.3L47.3 735.0" class="gM" stroke-width="1.98"/>
<path d="M47.3 735.0L52.9 739.9" class="gM" stroke-width="1.98"/>
<path d="M52.9 739.9L58.5 744.8" class="gM" stroke-width="1.99"/>
<path d="M845.0 699.4L842.4 704.8" class="gM" stroke-width="1.95"/>
<path d="M842.4 704.8L839.7 710.3" class="gM" stroke-width="1.96"/>
<path d="M839.7 710.3L836.3 717.3" class="gM" stroke-width="1.96"/>
<path d="M836.3 717.3L833.5 723.1" class="gM" stroke-width="1.97"/>
<path d="M833.5 723.1L829.9 730.4" class="gM" stroke-width="1.97"/>
<path d="M829.9 730.4L827.0 736.4" class="gM" stroke-width="1.98"/>
<path d="M827.0 736.4L823.3 744.1" class="gM" stroke-width="1.99"/>
 </g>
 <!-- floor shadow -->
 <path d="M722.0 365.3C724.3 365.3 726.9 365.7 729.0 366.3C731.1 366.9 732.8 367.6 734.5 369.0C736.2 370.4 737.9 372.5 739.0 374.5C740.1 376.5 740.6 378.4 741.0 381.0C741.4 383.6 741.7 387.0 741.6 390.0C741.5 393.0 741.1 396.3 740.6 399.0C740.1 401.7 739.5 404.4 738.6 406.3C737.8 408.2 736.5 409.2 735.5 410.5C734.5 411.8 733.5 412.6 732.7 413.8C731.9 415.0 730.7 416.3 730.8 417.5C730.9 418.7 732.0 419.2 733.5 420.8C735.0 422.4 738.1 424.7 739.7 427.4C741.3 430.1 742.1 433.6 743.0 437.0C743.9 440.4 743.4 443.7 745.0 448.0C746.6 452.3 749.4 456.6 752.6 462.6C755.8 468.6 760.1 477.2 764.0 483.8C767.9 490.4 772.7 498.0 776.0 502.5C779.3 507.0 782.2 508.2 784.0 511.0C785.8 513.8 786.5 516.5 787.0 519.0C787.5 521.5 787.4 525.3 787.0 526.0C786.6 526.7 785.2 522.8 784.5 523.0C783.8 523.2 783.6 527.2 783.0 527.0C782.4 526.8 781.7 522.3 781.0 522.0C780.3 521.7 779.8 525.8 779.0 525.0C778.2 524.2 777.0 519.2 776.0 517.0C775.0 514.8 774.2 514.4 773.0 512.0C771.8 509.6 771.7 507.2 769.0 502.5C766.3 497.8 760.7 489.6 757.0 483.8C753.3 478.1 749.3 468.5 747.0 468.0C744.7 467.5 743.0 477.0 743.0 481.0C743.0 485.0 745.8 488.8 747.0 492.0C748.2 495.2 748.8 496.2 750.0 500.0C751.2 503.8 753.0 509.2 754.0 515.0C755.0 520.8 755.7 525.3 756.0 534.8C756.3 544.3 756.6 559.6 756.0 572.0C755.4 584.4 753.1 599.3 752.6 609.0C752.1 618.7 752.8 623.4 753.0 630.0C753.2 636.6 753.5 642.2 754.0 648.6C754.5 655.0 754.2 664.1 756.0 668.5C757.8 672.9 761.4 672.8 765.0 675.0C768.6 677.2 775.3 680.2 777.4 682.0C779.5 683.8 780.5 685.2 777.4 685.8C774.3 686.4 764.6 686.1 758.8 685.5C753.0 684.9 745.2 684.2 742.7 682.0C740.2 679.8 743.6 674.7 744.0 672.0C744.4 669.3 745.4 670.7 745.0 666.0C744.6 661.3 743.3 652.4 741.5 643.7C739.7 635.0 735.5 624.0 734.0 614.0C732.5 604.0 733.8 595.2 732.8 584.0C731.8 572.8 729.5 554.4 728.0 547.0C726.5 539.6 726.0 537.5 724.0 539.7C722.0 541.9 718.8 553.0 716.0 560.0C713.2 567.0 710.0 575.3 707.0 582.0C704.0 588.7 700.9 594.2 698.0 600.0C695.1 605.8 692.2 610.5 689.5 616.5C686.8 622.5 683.6 630.6 682.0 636.0C680.4 641.4 680.4 643.2 679.6 648.6C678.8 654.0 675.8 664.1 677.0 668.5C678.2 672.9 683.7 672.9 687.0 675.0C690.3 677.1 695.2 679.4 697.0 681.0C698.8 682.6 700.9 683.8 698.0 684.5C695.1 685.2 685.8 685.4 679.6 685.0C673.4 684.6 664.1 683.9 661.0 682.0C657.9 680.1 660.5 677.1 661.0 673.4C661.5 669.7 663.2 664.1 664.0 660.0C664.8 655.9 664.8 655.9 666.0 648.6C667.2 641.4 668.5 626.4 671.0 616.5C673.5 606.6 677.3 598.5 681.0 589.0C684.7 579.5 690.3 567.7 693.0 559.5C695.7 551.3 695.9 546.2 697.0 540.0C698.1 533.8 698.4 527.7 699.4 522.4C700.4 517.1 701.7 512.5 703.0 508.0C704.3 503.5 705.8 500.7 707.0 495.5C708.2 490.3 710.2 483.3 710.4 476.7C710.6 470.1 709.0 460.3 708.0 455.6C707.0 450.9 706.0 446.7 704.5 448.6C703.0 450.5 700.5 460.9 698.7 467.0C697.0 473.1 695.4 479.5 694.0 485.0C692.6 490.5 691.1 495.2 690.5 500.0C689.9 504.8 691.1 510.3 690.5 514.0C689.9 517.7 688.0 520.0 687.0 522.0C686.0 524.0 685.6 526.3 684.6 526.0C683.6 525.7 682.4 522.3 681.0 520.0C679.6 517.7 676.5 514.5 676.0 512.0C675.5 509.5 677.2 507.0 678.0 505.0C678.8 503.0 679.9 503.9 681.0 500.0C682.1 496.1 683.0 488.8 684.6 481.4C686.2 474.0 688.8 463.8 690.5 455.6C692.2 447.4 693.8 437.4 695.0 432.0C696.2 426.6 696.2 425.6 697.5 423.5C698.8 421.4 701.1 420.8 703.0 419.5C704.9 418.2 707.4 416.8 709.0 415.5C710.6 414.2 712.0 412.8 712.5 411.5C713.0 410.2 713.0 408.9 712.2 407.5C711.5 406.1 709.4 404.7 708.0 402.8C706.6 400.9 705.0 398.3 704.0 396.0C703.0 393.7 702.6 391.5 702.3 389.0C702.0 386.5 702.0 383.5 702.4 381.0C702.8 378.5 703.4 376.0 704.5 374.0C705.6 372.0 707.2 370.3 709.0 369.0C710.8 367.7 712.8 366.8 715.0 366.2C717.2 365.6 719.7 365.3 722.0 365.3Z" fill="#3e444c" fill-opacity=".88"/>
 <!-- horizon line -->
 <rect x="28" y="686" width="808" height="1.2" fill="#44505b" fill-opacity=".9"/>

 <!-- ===== figure ===== -->
 <g id="fig">
  <!-- left arm -->
  <g clip-path="url(#cLarm)">
   <path d="M431.0 198.0C429.0 198.7 425.4 203.2 423.0 207.0C420.6 210.8 419.0 215.3 416.5 221.0C414.0 226.7 411.2 234.5 408.0 241.0C404.8 247.5 401.3 252.8 397.0 260.0C392.7 267.2 387.7 274.7 382.0 284.0C376.3 293.3 367.7 308.7 363.0 316.0C358.3 323.3 356.0 325.0 354.0 328.0C352.0 331.0 350.3 332.3 351.0 334.0C351.7 335.7 355.7 337.8 358.0 338.0C360.3 338.2 362.7 337.7 365.0 335.0C367.3 332.3 367.5 328.0 372.0 322.0C376.5 316.0 386.2 305.8 392.0 299.0C397.8 292.2 402.3 287.2 407.0 281.0C411.7 274.8 416.5 267.2 420.0 262.0C423.5 256.8 425.8 254.3 428.0 250.0C430.2 245.7 431.8 241.8 433.0 236.0C434.2 230.2 434.7 220.5 435.0 215.0C435.3 209.5 435.7 205.8 435.0 203.0C434.3 200.2 433.0 197.3 431.0 198.0Z" fill="url(#larmG)"/>
   <path d="M423.0 207.0C421.9 209.3 419.0 215.3 416.5 221.0C414.0 226.7 411.2 234.5 408.0 241.0C404.8 247.5 401.3 252.8 397.0 260.0C392.7 267.2 387.7 274.7 382.0 284.0C376.3 293.3 367.7 308.7 363.0 316.0C358.3 323.3 355.5 326.0 354.0 328.0M372.0 322.0C375.3 318.2 386.2 305.8 392.0 299.0C397.8 292.2 402.3 287.2 407.0 281.0C411.7 274.8 416.5 267.2 420.0 262.0C423.5 256.8 426.7 252.0 428.0 250.0" fill="none" stroke="#e6a596" stroke-width="3.5" filter="url(#b1)"/>
   <path d="M424 215 L398 268 L366 318" stroke="#e9a796" stroke-width="4" filter="url(#b2)" fill="none"/>
   <path d="M428 240 L402 282 L372 326" stroke="#c0523e" stroke-width="3" filter="url(#b2)" fill="none" opacity=".8"/>
  </g>
  <g>
   <path d="M350 329 L342 342 L339.6 352 L346 354.5 L353 352.5 L358.4 348 L360.8 341 L364.5 333 Z" fill="#d27a65" stroke="#d27a65" stroke-width="1.5" stroke-linejoin="round"/>
   <g stroke="#cc6a55" stroke-linecap="round" fill="none"><path d="M341.6 350 L339.8 363.4" stroke-width="3.3"/><path d="M345.8 352.5 L348 362.2" stroke-width="3.1"/><path d="M351.4 350.6 L353.6 357.8" stroke-width="3"/><path d="M356.4 346.4 L358.8 351.6" stroke-width="2.8"/></g>
   <path d="M356 334 L346 350" stroke="#f0c2b4" stroke-width="4" filter="url(#b1)"/>
   <g stroke="#b8503c" stroke-linecap="round" stroke-width="1.6" filter="url(#b1)"><path d="M339.4 358 L339.6 364"/><path d="M347.4 358 L348.2 362.8"/><path d="M353 354 L353.8 358.2"/></g>
  </g>
  <!-- left leg -->
  <g clip-path="url(#cLleg)">
   <path d="M413.0 349.0C410.7 351.3 407.3 361.8 405.0 369.0C402.7 376.2 400.5 383.3 399.0 392.0C397.5 400.7 396.2 413.0 396.0 421.0C395.8 429.0 397.5 434.3 398.0 440.0C398.5 445.7 398.5 449.8 399.0 455.0C399.5 460.2 401.2 466.0 401.0 471.0C400.8 476.0 398.8 481.7 398.0 485.0C397.2 488.3 396.7 486.0 396.0 491.0C395.3 496.0 394.7 506.2 394.0 515.0C393.3 523.8 392.7 537.2 392.0 544.0C391.3 550.8 389.3 553.0 390.0 556.0C390.7 559.0 393.8 561.7 396.0 562.0C398.2 562.3 401.3 561.0 403.0 558.0C404.7 555.0 403.8 551.2 406.0 544.0C408.2 536.8 413.0 523.8 416.0 515.0C419.0 506.2 422.5 497.7 424.0 491.0C425.5 484.3 424.0 480.7 425.0 475.0C426.0 469.3 428.2 463.3 430.0 457.0C431.8 450.7 433.7 444.7 436.0 437.0C438.3 429.3 442.0 418.3 444.0 411.0C446.0 403.7 446.7 397.5 448.0 393.0C449.3 388.5 453.7 386.3 452.0 384.0C450.3 381.7 441.8 381.5 438.0 379.0C434.2 376.5 432.2 373.0 429.0 369.0C425.8 365.0 421.7 358.3 419.0 355.0C416.3 351.7 415.3 346.7 413.0 349.0Z" fill="url(#skin)"/>
   <path d="M413.0 349.0C411.7 352.3 407.3 361.8 405.0 369.0C402.7 376.2 400.5 383.3 399.0 392.0C397.5 400.7 396.2 413.0 396.0 421.0C395.8 429.0 397.5 434.3 398.0 440.0C398.5 445.7 398.5 449.8 399.0 455.0C399.5 460.2 401.2 466.0 401.0 471.0C400.8 476.0 398.8 481.7 398.0 485.0C397.2 488.3 396.7 486.0 396.0 491.0C395.3 496.0 394.7 506.2 394.0 515.0C393.3 523.8 392.7 537.2 392.0 544.0C391.3 550.8 389.3 553.0 390.0 556.0C390.7 559.0 393.8 561.7 396.0 562.0C398.2 562.3 401.3 561.0 403.0 558.0C404.7 555.0 403.8 551.2 406.0 544.0C408.2 536.8 413.0 523.8 416.0 515.0C419.0 506.2 422.5 497.7 424.0 491.0C425.5 484.3 424.0 480.7 425.0 475.0C426.0 469.3 428.2 463.3 430.0 457.0C431.8 450.7 433.7 444.7 436.0 437.0C438.3 429.3 442.0 418.3 444.0 411.0C446.0 403.7 446.7 397.5 448.0 393.0C449.3 388.5 451.3 385.5 452.0 384.0" fill="none" stroke="#edb6a8" stroke-width="6" filter="url(#b1)"/>
   <path d="M406 372 C402 420 404 450 406 470 C404 500 400 530 396 552" stroke="#e09482" stroke-width="9" fill="none" filter="url(#b3)"/>
   <path d="M417 372 C412 420 414 450 416 468" stroke="#e29584" stroke-width="9" fill="none" filter="url(#b3)"/>
   <path d="M412 486 C408 510 404 530 400 550" stroke="#efb0a0" stroke-width="6" fill="none" filter="url(#b2)"/>
   <path d="M401 471 Q412 477 424 472" stroke="#b8493a" stroke-width="1.6" fill="none" filter="url(#b1)"/>
  </g>
  <g clip-path="url(#cLfoot)">
   <path d="M390.0 553.0C388.5 555.2 390.3 558.7 388.0 562.0C385.7 565.3 380.0 569.3 376.0 573.0C372.0 576.7 366.7 580.5 364.0 584.0C361.3 587.5 360.3 591.5 360.0 594.0C359.7 596.5 361.0 597.8 362.0 599.0C363.0 600.2 364.2 601.2 366.0 601.0C367.8 600.8 370.3 599.5 373.0 598.0C375.7 596.5 378.2 595.3 382.0 592.0C385.8 588.7 392.2 581.5 396.0 578.0C399.8 574.5 403.2 573.5 405.0 571.0C406.8 568.5 407.0 566.0 407.0 563.0C407.0 560.0 406.7 555.3 405.0 553.0C403.3 550.7 399.5 549.0 397.0 549.0C394.5 549.0 391.5 550.8 390.0 553.0Z" fill="#dc8a78"/>
   <path d="M390.0 553.0C388.5 555.2 390.3 558.7 388.0 562.0C385.7 565.3 380.0 569.3 376.0 573.0C372.0 576.7 366.7 580.5 364.0 584.0C361.3 587.5 360.3 591.5 360.0 594.0C359.7 596.5 361.0 597.8 362.0 599.0C363.0 600.2 364.2 601.2 366.0 601.0C367.8 600.8 370.3 599.5 373.0 598.0C375.7 596.5 378.2 595.3 382.0 592.0C385.8 588.7 392.2 581.5 396.0 578.0C399.8 574.5 403.2 573.5 405.0 571.0C406.8 568.5 407.0 566.0 407.0 563.0C407.0 560.0 406.7 555.3 405.0 553.0C403.3 550.7 399.5 549.0 397.0 549.0C394.5 549.0 391.5 550.8 390.0 553.0Z" fill="none" stroke="#f4d0c8" stroke-width="4" filter="url(#b1)"/>
   <path d="M398 560 L368 594" stroke="#f6d8d0" stroke-width="8" filter="url(#b2)"/>
   <path d="M405 560 Q402 574 384 592" stroke="#c9604c" stroke-width="3.5" fill="none" filter="url(#b2)" opacity=".8"/>
   <g stroke="#b4503e" stroke-width="1" opacity=".8"><path d="M363.5 594 L366 600"/><path d="M367.5 593 L370 599.5"/><path d="M371.5 591.5 L374 597.5"/></g>
  </g>
  <!-- torso -->
  <g clip-path="url(#cTorso)">
   <path d="M456.0 184.0C452.2 187.7 450.3 190.2 447.0 192.0C443.7 193.8 438.7 193.7 436.0 195.0C433.3 196.3 432.3 197.8 431.0 200.0C429.7 202.2 428.6 204.3 428.0 208.0C427.4 211.7 427.4 217.3 427.5 222.0C427.6 226.7 428.1 231.7 428.5 236.0C428.9 240.3 429.3 242.7 430.0 248.0C430.7 253.3 432.2 261.7 432.5 268.0C432.8 274.3 432.1 280.5 431.5 286.0C430.9 291.5 430.2 296.2 429.0 301.0C427.8 305.8 425.8 310.2 424.0 315.0C422.2 319.8 419.8 325.2 418.0 330.0C416.2 334.8 414.1 340.3 413.0 344.0C411.9 347.7 410.5 349.8 411.5 352.0C412.5 354.2 416.1 354.2 419.0 357.0C421.9 359.8 425.7 365.3 429.0 369.0C432.3 372.7 435.2 376.5 439.0 379.0C442.8 381.5 446.8 382.5 452.0 384.0C457.2 385.5 462.3 387.5 470.0 388.0C477.7 388.5 492.1 388.3 498.0 387.0C503.9 385.7 504.7 383.2 505.5 380.0C506.3 376.8 504.3 372.3 503.0 368.0C501.7 363.7 499.3 359.0 497.5 354.0C495.7 349.0 493.9 344.0 492.0 338.0C490.1 332.0 487.3 325.0 486.0 318.0C484.7 311.0 483.3 304.3 484.0 296.0C484.7 287.7 487.3 276.3 490.0 268.0C492.7 259.7 496.3 250.7 500.0 246.0C503.7 241.3 508.3 243.0 512.0 240.0C515.7 237.0 520.7 232.2 522.0 228.0C523.3 223.8 522.0 219.3 520.0 215.0C518.0 210.7 514.0 205.0 510.0 202.0C506.0 199.0 499.8 199.0 496.0 197.0C492.2 195.0 489.2 194.2 487.0 190.0C484.8 185.8 485.8 175.3 483.0 172.0C480.2 168.7 474.5 168.0 470.0 170.0C465.5 172.0 459.8 180.3 456.0 184.0Z" fill="url(#torsoG)"/>
   <path d="M497.5 354.0C496.6 351.3 493.9 344.0 492.0 338.0C490.1 332.0 487.3 325.0 486.0 318.0C484.7 311.0 483.3 304.3 484.0 296.0C484.7 287.7 487.3 276.3 490.0 268.0C492.7 259.7 496.3 250.7 500.0 246.0C503.7 241.3 508.3 243.0 512.0 240.0C515.7 237.0 520.7 232.2 522.0 228.0C523.3 223.8 522.0 219.3 520.0 215.0C518.0 210.7 514.0 205.0 510.0 202.0C506.0 199.0 499.8 199.0 496.0 197.0C492.2 195.0 489.2 194.2 487.0 190.0C484.8 185.8 485.8 175.3 483.0 172.0C480.2 168.7 474.5 168.0 470.0 170.0C465.5 172.0 459.8 180.3 456.0 184.0C452.2 187.7 450.3 190.2 447.0 192.0C443.7 193.8 438.7 193.7 436.0 195.0C433.3 196.3 432.3 197.8 431.0 200.0C429.7 202.2 428.6 204.3 428.0 208.0C427.4 211.7 427.4 217.3 427.5 222.0C427.6 226.7 428.1 231.7 428.5 236.0C428.9 240.3 429.3 242.7 430.0 248.0C430.7 253.3 432.2 261.7 432.5 268.0C432.8 274.3 432.1 280.5 431.5 286.0C430.9 291.5 430.2 296.2 429.0 301.0C427.8 305.8 425.8 310.2 424.0 315.0C422.2 319.8 419.8 325.2 418.0 330.0C416.2 334.8 414.1 340.3 413.0 344.0C411.9 347.7 411.8 350.7 411.5 352.0" fill="none" stroke="#f2cec4" stroke-width="6" filter="url(#b2)"/>
   <!-- upper chest light -->
   <ellipse cx="450" cy="224" rx="20" ry="20" fill="#e8c2b8" filter="url(#b5)" opacity=".8"/>
   <!-- belly glossy band -->
   <path d="M446 262 C440 300 452 330 444 372" stroke="#f6dcd4" stroke-width="13" fill="none" filter="url(#b3)"/>
   <!-- right side shadow -->
   <path d="M492 262 C480 290 480 320 494 352" stroke="#bf6450" stroke-width="11" fill="none" filter="url(#b3)" opacity=".85"/>
   <path d="M490 300 C492 320 498 340 502 356" stroke="#f2cabe" stroke-width="3.5" fill="none" filter="url(#b1)"/>
   <!-- breast shadow -->
   <ellipse cx="474" cy="243" rx="9" ry="8" fill="#e8beb2" filter="url(#b3)" opacity=".9"/>
   <path d="M458 257 Q474 263 487 247" stroke="#bd6e5c" stroke-width="4.5" fill="none" filter="url(#b2)"/>
   <!-- buttock crease -->
   <path d="M414 340 C418 360 432 378 452 384" stroke="#f8e4de" stroke-width="3" fill="none" filter="url(#b1)"/>
   <path d="M420 322 C424 346 436 366 454 374" stroke="#cc7c6a" stroke-width="8" fill="none" filter="url(#b3)" opacity=".8"/>
   <!-- neck shade -->
   <path d="M456 182 L478 198" stroke="#b86654" stroke-width="9" filter="url(#b2)" opacity=".85"/>
   <path d="M430 200 Q452 196 470 204 Q490 200 512 206" stroke="#f4d8d0" stroke-width="3" fill="none" filter="url(#b2)"/>
  </g>
  <!-- right leg -->
  <g mask="url(#mR)"><g clip-path="url(#cRleg)">
   <path d="M456.0 381.0C456.5 376.8 458.7 371.8 461.0 368.0C463.3 364.2 466.2 361.0 470.0 358.0C473.8 355.0 479.5 351.5 484.0 350.0C488.5 348.5 493.8 346.3 497.0 349.0C500.2 351.7 501.5 360.8 503.0 366.0C504.5 371.2 504.3 374.0 506.0 380.0C507.7 386.0 511.0 395.8 513.0 402.0C515.0 408.2 516.2 408.8 518.0 417.0C519.8 425.2 522.0 440.7 524.0 451.0C526.0 461.3 528.3 471.7 530.0 479.0C531.7 486.3 531.7 489.7 534.0 495.0C536.3 500.3 540.5 505.7 544.0 511.0C547.5 516.3 552.3 521.5 555.0 527.0C557.7 532.5 558.7 536.2 560.0 544.0C561.3 551.8 561.8 564.0 563.0 574.0C564.2 584.0 566.0 596.7 567.0 604.0C568.0 611.3 569.8 614.3 569.0 618.0C568.2 621.7 564.7 625.7 562.0 626.0C559.3 626.3 554.7 621.3 553.0 620.0C551.3 618.7 553.8 624.0 552.0 618.0C550.2 612.0 546.2 596.3 542.0 584.0C537.8 571.7 530.7 553.5 527.0 544.0C523.3 534.5 522.8 532.8 520.0 527.0C517.2 521.2 514.0 516.0 510.0 509.0C506.0 502.0 501.0 494.7 496.0 485.0C491.0 475.3 485.0 462.3 480.0 451.0C475.0 439.7 469.7 426.7 466.0 417.0C462.3 407.3 459.7 399.0 458.0 393.0C456.3 387.0 455.5 385.2 456.0 381.0Z" fill="url(#skin)"/>
   <path d="M503.0 366.0C503.5 368.3 504.3 374.0 506.0 380.0C507.7 386.0 511.0 395.8 513.0 402.0C515.0 408.2 516.2 408.8 518.0 417.0C519.8 425.2 522.0 440.7 524.0 451.0C526.0 461.3 528.3 471.7 530.0 479.0C531.7 486.3 531.7 489.7 534.0 495.0C536.3 500.3 540.5 505.7 544.0 511.0C547.5 516.3 552.3 521.5 555.0 527.0C557.7 532.5 558.7 536.2 560.0 544.0C561.3 551.8 561.8 564.0 563.0 574.0C564.2 584.0 566.0 596.7 567.0 604.0C568.0 611.3 569.8 614.3 569.0 618.0C568.2 621.7 564.7 625.7 562.0 626.0C559.3 626.3 554.7 621.3 553.0 620.0C551.3 618.7 553.8 624.0 552.0 618.0C550.2 612.0 546.2 596.3 542.0 584.0C537.8 571.7 530.7 553.5 527.0 544.0C523.3 534.5 522.8 532.8 520.0 527.0C517.2 521.2 514.0 516.0 510.0 509.0C506.0 502.0 501.0 494.7 496.0 485.0C491.0 475.3 485.0 462.3 480.0 451.0C475.0 439.7 469.7 426.7 466.0 417.0C462.3 407.3 459.3 397.0 458.0 393.0" fill="none" stroke="#edb6a8" stroke-width="6" filter="url(#b1)"/>
   <path d="M468 388 C482 422 494 452 510 492 C520 520 532 560 548 612" stroke="#de8d7b" stroke-width="9" fill="none" filter="url(#b3)"/>
   <path d="M474 368 C488 400 498 430 508 470" stroke="#fbe6e0" stroke-width="5" fill="none" filter="url(#b2)"/>
   <path d="M492 375 C504 415 512 450 518 482" stroke="#dd8a78" stroke-width="7" fill="none" filter="url(#b3)"/>
   <path d="M536 512 C544 542 554 580 560 616" stroke="#dd7e6a" stroke-width="6" fill="none" filter="url(#b2)"/>
   <path d="M508 508 Q520 500 534 490" stroke="#f6d6cc" stroke-width="1.6" fill="none" filter="url(#b1)"/>
   <path d="M464 368 Q478 370 496 362" stroke="#b8503e" stroke-width="1.5" fill="none" filter="url(#b1)" opacity=".8"/>
  </g>
  </g>
  <g clip-path="url(#cRfoot)">
   <path d="M552.0 622.0C551.0 624.5 554.3 627.3 552.0 632.0C549.7 636.7 542.2 644.7 538.0 650.0C533.8 655.3 529.5 660.3 527.0 664.0C524.5 667.7 523.2 669.8 523.0 672.0C522.8 674.2 524.5 675.8 526.0 677.0C527.5 678.2 529.5 678.5 532.0 679.0C534.5 679.5 538.0 680.2 541.0 680.0C544.0 679.8 546.8 680.3 550.0 678.0C553.2 675.7 557.0 670.3 560.0 666.0C563.0 661.7 565.8 656.7 568.0 652.0C570.2 647.3 572.3 642.0 573.0 638.0C573.7 634.0 573.2 631.2 572.0 628.0C570.8 624.8 568.3 620.8 566.0 619.0C563.7 617.2 560.3 616.5 558.0 617.0C555.7 617.5 553.0 619.5 552.0 622.0Z" fill="#de8e7c"/>
   <path d="M552.0 622.0C551.0 624.5 554.3 627.3 552.0 632.0C549.7 636.7 542.2 644.7 538.0 650.0C533.8 655.3 529.5 660.3 527.0 664.0C524.5 667.7 523.2 669.8 523.0 672.0C522.8 674.2 524.5 675.8 526.0 677.0C527.5 678.2 529.5 678.5 532.0 679.0C534.5 679.5 538.0 680.2 541.0 680.0C544.0 679.8 546.8 680.3 550.0 678.0C553.2 675.7 557.0 670.3 560.0 666.0C563.0 661.7 565.8 656.7 568.0 652.0C570.2 647.3 572.3 642.0 573.0 638.0C573.7 634.0 573.2 631.2 572.0 628.0C570.8 624.8 568.3 620.8 566.0 619.0C563.7 617.2 560.3 616.5 558.0 617.0C555.7 617.5 553.0 619.5 552.0 622.0Z" fill="none" stroke="#f4d0c8" stroke-width="4" filter="url(#b1)"/>
   <path d="M558 628 L536 668" stroke="#fbeae4" stroke-width="11" filter="url(#b2)"/>
   <path d="M566 630 Q570 645 558 668" stroke="#c9604c" stroke-width="4" fill="none" filter="url(#b2)" opacity=".8"/>
   <g stroke="#b4503e" stroke-width="1" opacity=".85"><path d="M529.5 672 L531 679"/><path d="M535 673.5 L536 680"/><path d="M540.5 674.5 L541 680.5"/><path d="M546 674.5 L546.5 680"/></g>
  </g>
  <!-- right arm -->
  <g clip-path="url(#cRarm)">
   <path d="M510.0 203.0C507.5 205.8 505.3 218.5 504.0 225.0C502.7 231.5 500.3 234.8 502.0 242.0C503.7 249.2 509.7 258.0 514.0 268.0C518.3 278.0 523.3 291.0 528.0 302.0C532.7 313.0 537.7 324.3 542.0 334.0C546.3 343.7 551.5 353.7 554.0 360.0C556.5 366.3 556.0 368.7 557.0 372.0C558.0 375.3 558.0 378.7 560.0 380.0C562.0 381.3 567.0 381.7 569.0 380.0C571.0 378.3 571.8 373.3 572.0 370.0C572.2 366.7 571.0 364.2 570.0 360.0C569.0 355.8 567.4 350.5 566.0 345.0C564.6 339.5 563.2 333.2 561.5 327.0C559.8 320.8 557.8 314.2 556.0 308.0C554.2 301.8 552.5 295.3 550.5 290.0C548.5 284.7 546.5 281.3 544.0 276.0C541.5 270.7 538.0 264.0 535.5 258.0C533.0 252.0 530.8 246.0 529.0 240.0C527.2 234.0 526.7 227.3 525.0 222.0C523.3 216.7 521.5 211.2 519.0 208.0C516.5 204.8 512.5 200.2 510.0 203.0Z" fill="url(#rarmG)"/>
   <path d="M504.0 225.0C503.7 227.8 500.3 234.8 502.0 242.0C503.7 249.2 509.7 258.0 514.0 268.0C518.3 278.0 523.3 291.0 528.0 302.0C532.7 313.0 537.7 324.3 542.0 334.0C546.3 343.7 551.5 353.7 554.0 360.0C556.5 366.3 556.5 370.0 557.0 372.0M572.0 370.0C571.7 368.3 571.0 364.2 570.0 360.0C569.0 355.8 567.4 350.5 566.0 345.0C564.6 339.5 563.2 333.2 561.5 327.0C559.8 320.8 557.8 314.2 556.0 308.0C554.2 301.8 552.5 295.3 550.5 290.0C548.5 284.7 546.5 281.3 544.0 276.0C541.5 270.7 538.0 264.0 535.5 258.0C533.0 252.0 530.8 246.0 529.0 240.0C527.2 234.0 525.7 225.0 525.0 222.0" fill="none" stroke="#f0c8be" stroke-width="5" filter="url(#b1)"/>
   <path d="M519 215 C522 250 540 292 562 360" stroke="#f6dcd4" stroke-width="6" fill="none" filter="url(#b2)"/>
   <path d="M508 240 C512 260 522 290 542 335" stroke="#bf6a58" stroke-width="3" fill="none" filter="url(#b2)" opacity=".7"/>
  </g>
  <g clip-path="url(#cRhand)">
   <path d="M556.0 374.0C553.3 374.8 555.6 375.8 554.9 377.7C554.2 379.6 552.2 383.3 551.6 385.5C551.0 387.7 551.2 389.1 551.2 391.0C551.2 392.9 551.4 394.8 551.6 396.6C551.9 398.5 552.1 400.3 552.7 402.1C553.4 403.9 554.6 406.8 555.5 407.6C556.4 408.4 557.7 408.0 558.2 407.1C558.8 406.2 558.9 403.9 558.8 402.1C558.7 400.4 557.3 398.2 557.7 396.6C558.1 395.0 559.7 392.5 561.0 392.7C562.3 392.9 564.4 395.2 565.5 397.7C566.6 400.2 567.4 404.5 567.7 407.6C568.0 410.7 567.1 414.2 567.1 416.5C567.1 418.8 567.5 420.0 568.0 421.5C568.5 423.0 569.2 424.9 569.9 425.4C570.6 425.9 571.4 425.8 572.1 424.3C572.8 422.8 573.4 418.9 574.3 416.5C575.2 414.1 576.8 412.5 577.6 409.9C578.4 407.3 578.9 404.0 579.3 401.0C579.7 398.0 580.4 395.1 579.9 392.1C579.4 389.2 577.6 385.7 576.5 383.3C575.4 380.9 574.1 379.4 573.2 377.7C572.3 376.0 573.9 373.6 571.0 373.0C568.1 372.4 558.7 373.2 556.0 374.0Z" fill="#d08672"/>
   <path d="M560 380 Q566 388 572 400" stroke="#f0cabe" stroke-width="7" fill="none" filter="url(#b2)"/>
   <path d="M553 398 L556.5 407 M569 414 L570.5 425 M576 404 L573 418" stroke="#bd5a46" stroke-width="3" fill="none" filter="url(#b1)"/>
  </g>
  <!-- head -->
  <g clip-path="url(#cHead)">
   <path d="M465.7 91.0C471.4 90.5 477.0 92.3 481.4 94.1C485.8 95.9 489.3 98.5 492.3 101.9C495.3 105.3 497.8 110.2 499.4 114.4C501.0 118.6 501.6 122.8 501.7 127.0C501.8 131.2 501.1 135.8 500.2 139.5C499.3 143.2 497.2 146.2 496.2 149.0C495.1 151.8 495.6 153.0 493.9 156.0C492.2 159.0 488.6 164.5 486.0 167.0C483.4 169.5 481.6 168.6 478.2 170.8C474.8 173.0 469.6 177.5 465.7 180.2C461.8 182.9 457.4 185.9 454.8 187.2C452.2 188.5 451.6 188.4 450.0 188.0C448.4 187.6 447.2 187.0 445.4 184.9C443.6 182.8 441.0 178.9 439.0 175.5C437.0 172.1 435.0 168.7 433.6 164.5C432.2 160.3 431.3 155.6 430.5 150.4C429.7 145.2 429.1 138.1 429.0 133.2C428.9 128.2 428.8 124.9 429.7 120.7C430.6 116.5 431.5 112.1 434.4 108.2C437.3 104.3 441.8 100.1 447.0 97.2C452.2 94.3 460.0 91.5 465.7 91.0Z" fill="#d2a29b"/>
   <path d="M465.7 91.0C471.4 90.5 477.0 92.3 481.4 94.1C485.8 95.9 489.3 98.5 492.3 101.9C495.3 105.3 497.8 110.2 499.4 114.4C501.0 118.6 501.6 122.8 501.7 127.0C501.8 131.2 501.1 135.8 500.2 139.5C499.3 143.2 497.2 146.2 496.2 149.0C495.1 151.8 495.6 153.0 493.9 156.0C492.2 159.0 488.6 164.5 486.0 167.0C483.4 169.5 481.6 168.6 478.2 170.8C474.8 173.0 469.6 177.5 465.7 180.2C461.8 182.9 457.4 185.9 454.8 187.2C452.2 188.5 451.6 188.4 450.0 188.0C448.4 187.6 447.2 187.0 445.4 184.9C443.6 182.8 441.0 178.9 439.0 175.5C437.0 172.1 435.0 168.7 433.6 164.5C432.2 160.3 431.3 155.6 430.5 150.4C429.7 145.2 429.1 138.1 429.0 133.2C428.9 128.2 428.8 124.9 429.7 120.7C430.6 116.5 431.5 112.1 434.4 108.2C437.3 104.3 441.8 100.1 447.0 97.2C452.2 94.3 460.0 91.5 465.7 91.0Z" fill="none" stroke="#e9ccc6" stroke-width="5" filter="url(#b2)"/>
   <ellipse cx="450" cy="116" rx="15" ry="14" fill="#e6c4be" filter="url(#b5)"/>
   <ellipse cx="452" cy="160" rx="19" ry="20" fill="#c4867d" filter="url(#b5)"/>
   <path d="M436 150 Q456 148 478 168" stroke="#b2766c" stroke-width="6" fill="none" filter="url(#b3)"/>
   <path d="M440 171 Q456 177 474 170" stroke="#e4b2a8" stroke-width="5" fill="none" filter="url(#b2)"/>
   <path d="M446 186 L456 187 L470 179 L484 166" stroke="#a5625a" stroke-width="3.5" fill="none" filter="url(#b1)"/>
   <path d="M437 172 Q441 182 449 187" stroke="#bd7a6e" stroke-width="4" fill="none" filter="url(#b2)"/>
   <ellipse cx="475.5" cy="122" rx="3.6" ry="13" fill="#fbf3f1" filter="url(#b2)"/>
   <path d="M493 146 Q498 150 494 158 Q490 166 485 167" stroke="#e6c0b8" stroke-width="3" fill="none" filter="url(#b1)"/>
   <ellipse cx="489" cy="156" rx="3.2" ry="7" fill="#9c6459" filter="url(#b1)" transform="rotate(22 489 156)"/>
   <path d="M496 112 Q502 130 497 148" stroke="#ecd2cc" stroke-width="4" fill="none" filter="url(#b2)"/>
  </g>
 </g>

 <!-- selection outline -->
 <g fill="none" stroke="#fff" stroke-opacity=".6" stroke-width=".9" stroke-dasharray="1.3 1.3">
  <path d="M465.7 91.0C471.4 90.5 477.0 92.3 481.4 94.1C485.8 95.9 489.3 98.5 492.3 101.9C495.3 105.3 497.8 110.2 499.4 114.4C501.0 118.6 501.6 122.8 501.7 127.0C501.8 131.2 501.1 135.8 500.2 139.5C499.3 143.2 497.2 146.2 496.2 149.0C495.1 151.8 495.6 153.0 493.9 156.0C492.2 159.0 488.6 164.5 486.0 167.0C483.4 169.5 481.6 168.6 478.2 170.8C474.8 173.0 469.6 177.5 465.7 180.2C461.8 182.9 457.4 185.9 454.8 187.2C452.2 188.5 451.6 188.4 450.0 188.0C448.4 187.6 447.2 187.0 445.4 184.9C443.6 182.8 441.0 178.9 439.0 175.5C437.0 172.1 435.0 168.7 433.6 164.5C432.2 160.3 431.3 155.6 430.5 150.4C429.7 145.2 429.1 138.1 429.0 133.2C428.9 128.2 428.8 124.9 429.7 120.7C430.6 116.5 431.5 112.1 434.4 108.2C437.3 104.3 441.8 100.1 447.0 97.2C452.2 94.3 460.0 91.5 465.7 91.0Z"/><path d="M423.0 207.0C421.9 209.3 419.0 215.3 416.5 221.0C414.0 226.7 411.2 234.5 408.0 241.0C404.8 247.5 401.3 252.8 397.0 260.0C392.7 267.2 387.7 274.7 382.0 284.0C376.3 293.3 367.7 308.7 363.0 316.0C358.3 323.3 355.5 326.0 354.0 328.0M372.0 322.0C375.3 318.2 386.2 305.8 392.0 299.0C397.8 292.2 402.3 287.2 407.0 281.0C411.7 274.8 416.5 267.2 420.0 262.0C423.5 256.8 426.7 252.0 428.0 250.0"/><path d="M572.0 370.0C571.7 368.3 571.0 364.2 570.0 360.0C569.0 355.8 567.4 350.5 566.0 345.0C564.6 339.5 563.2 333.2 561.5 327.0C559.8 320.8 557.8 314.2 556.0 308.0C554.2 301.8 552.5 295.3 550.5 290.0C548.5 284.7 546.5 281.3 544.0 276.0C541.5 270.7 538.0 264.0 535.5 258.0C533.0 252.0 530.8 246.0 529.0 240.0C527.2 234.0 526.7 227.3 525.0 222.0C523.3 216.7 520.0 210.3 519.0 208.0"/><path d="M413.0 349.0C411.7 352.3 407.3 361.8 405.0 369.0C402.7 376.2 400.5 383.3 399.0 392.0C397.5 400.7 396.2 413.0 396.0 421.0C395.8 429.0 397.5 434.3 398.0 440.0C398.5 445.7 398.5 449.8 399.0 455.0C399.5 460.2 401.2 466.0 401.0 471.0C400.8 476.0 398.8 481.7 398.0 485.0C397.2 488.3 396.7 486.0 396.0 491.0C395.3 496.0 394.7 506.2 394.0 515.0C393.3 523.8 392.7 537.2 392.0 544.0C391.3 550.8 389.3 553.0 390.0 556.0C390.7 559.0 393.8 561.7 396.0 562.0C398.2 562.3 401.3 561.0 403.0 558.0C404.7 555.0 403.8 551.2 406.0 544.0C408.2 536.8 413.0 523.8 416.0 515.0C419.0 506.2 422.5 497.7 424.0 491.0C425.5 484.3 424.0 480.7 425.0 475.0C426.0 469.3 428.2 463.3 430.0 457.0C431.8 450.7 433.7 444.7 436.0 437.0C438.3 429.3 442.0 418.3 444.0 411.0C446.0 403.7 446.7 397.5 448.0 393.0C449.3 388.5 451.3 385.5 452.0 384.0"/><path d="M503.0 366.0C503.5 368.3 504.3 374.0 506.0 380.0C507.7 386.0 511.0 395.8 513.0 402.0C515.0 408.2 516.2 408.8 518.0 417.0C519.8 425.2 522.0 440.7 524.0 451.0C526.0 461.3 528.3 471.7 530.0 479.0C531.7 486.3 531.7 489.7 534.0 495.0C536.3 500.3 540.5 505.7 544.0 511.0C547.5 516.3 552.3 521.5 555.0 527.0C557.7 532.5 558.7 536.2 560.0 544.0C561.3 551.8 561.8 564.0 563.0 574.0C564.2 584.0 566.0 596.7 567.0 604.0C568.0 611.3 569.8 614.3 569.0 618.0C568.2 621.7 564.7 625.7 562.0 626.0C559.3 626.3 554.7 621.3 553.0 620.0C551.3 618.7 553.8 624.0 552.0 618.0C550.2 612.0 546.2 596.3 542.0 584.0C537.8 571.7 530.7 553.5 527.0 544.0C523.3 534.5 522.8 532.8 520.0 527.0C517.2 521.2 514.0 516.0 510.0 509.0C506.0 502.0 501.0 494.7 496.0 485.0C491.0 475.3 485.0 462.3 480.0 451.0C475.0 439.7 469.7 426.7 466.0 417.0C462.3 407.3 459.3 397.0 458.0 393.0"/><path d="M390.0 553.0C388.5 555.2 390.3 558.7 388.0 562.0C385.7 565.3 380.0 569.3 376.0 573.0C372.0 576.7 366.7 580.5 364.0 584.0C361.3 587.5 360.3 591.5 360.0 594.0C359.7 596.5 361.0 597.8 362.0 599.0C363.0 600.2 364.2 601.2 366.0 601.0C367.8 600.8 370.3 599.5 373.0 598.0C375.7 596.5 378.2 595.3 382.0 592.0C385.8 588.7 392.2 581.5 396.0 578.0C399.8 574.5 403.2 573.5 405.0 571.0C406.8 568.5 407.0 566.0 407.0 563.0C407.0 560.0 406.7 555.3 405.0 553.0C403.3 550.7 399.5 549.0 397.0 549.0C394.5 549.0 391.5 550.8 390.0 553.0Z"/><path d="M552.0 622.0C551.0 624.5 554.3 627.3 552.0 632.0C549.7 636.7 542.2 644.7 538.0 650.0C533.8 655.3 529.5 660.3 527.0 664.0C524.5 667.7 523.2 669.8 523.0 672.0C522.8 674.2 524.5 675.8 526.0 677.0C527.5 678.2 529.5 678.5 532.0 679.0C534.5 679.5 538.0 680.2 541.0 680.0C544.0 679.8 546.8 680.3 550.0 678.0C553.2 675.7 557.0 670.3 560.0 666.0C563.0 661.7 565.8 656.7 568.0 652.0C570.2 647.3 572.3 642.0 573.0 638.0C573.7 634.0 573.2 631.2 572.0 628.0C570.8 624.8 568.3 620.8 566.0 619.0C563.7 617.2 560.3 616.5 558.0 617.0C555.7 617.5 553.0 619.5 552.0 622.0Z"/><path d="M556.0 374.0C553.3 374.8 555.6 375.8 554.9 377.7C554.2 379.6 552.2 383.3 551.6 385.5C551.0 387.7 551.2 389.1 551.2 391.0C551.2 392.9 551.4 394.8 551.6 396.6C551.9 398.5 552.1 400.3 552.7 402.1C553.4 403.9 554.6 406.8 555.5 407.6C556.4 408.4 557.7 408.0 558.2 407.1C558.8 406.2 558.9 403.9 558.8 402.1C558.7 400.4 557.3 398.2 557.7 396.6C558.1 395.0 559.7 392.5 561.0 392.7C562.3 392.9 564.4 395.2 565.5 397.7C566.6 400.2 567.4 404.5 567.7 407.6C568.0 410.7 567.1 414.2 567.1 416.5C567.1 418.8 567.5 420.0 568.0 421.5C568.5 423.0 569.2 424.9 569.9 425.4C570.6 425.9 571.4 425.8 572.1 424.3C572.8 422.8 573.4 418.9 574.3 416.5C575.2 414.1 576.8 412.5 577.6 409.9C578.4 407.3 578.9 404.0 579.3 401.0C579.7 398.0 580.4 395.1 579.9 392.1C579.4 389.2 577.6 385.7 576.5 383.3C575.4 380.9 574.1 379.4 573.2 377.7C572.3 376.0 573.9 373.6 571.0 373.0C568.1 372.4 558.7 373.2 556.0 374.0Z"/>
 </g>
 <!-- control handles -->
 <g stroke="#6d6a72" stroke-width="1.2" fill="#ded8e4" fill-opacity=".85">
  <rect x="462.5" y="182" width="16.5" height="16.5"/>
  <rect x="471.5" y="217.5" width="16.5" height="16.5"/>
  <rect x="449.5" y="350" width="16.5" height="16.5"/>
 </g>
 <g stroke="#505a66" stroke-width="1.2" fill="#ebe6f0" fill-opacity=".64">
  <circle cx="359.5" cy="327" r="9"/>
  <circle cx="564.5" cy="371" r="9.5"/>
  <circle cx="395.5" cy="554.5" r="8.5" fill-opacity=".55"/>
  <circle cx="561" cy="624.5" r="8.7" fill-opacity=".55"/>
 </g>
</svg>

<!-- desktop icon sample -->
<div class="abs" style="left:36px;top:30px;width:83px;height:68.5px;background:#000"></div>
<svg class="abs" style="left:56px;top:32px" width="40" height="36" viewBox="84 73 40 36">
 <defs>
  <linearGradient id="cubeT" x1="0" y1="0" x2="1" y2="0"><stop offset="0" stop-color="#d8dadc"/><stop offset=".5" stop-color="#ffffff"/><stop offset="1" stop-color="#e4e6e8"/></linearGradient>
  <linearGradient id="cubeL" x1="0" y1="0" x2="1" y2="0"><stop offset="0" stop-color="#a0a4a8"/><stop offset="1" stop-color="#6c7074"/></linearGradient>
  <linearGradient id="cubeR" x1="0" y1="0" x2="1" y2="0"><stop offset="0" stop-color="#7c8084"/><stop offset="1" stop-color="#c8ccd0"/></linearGradient>
 </defs>
 <path d="M87 78.4 L103 75.4 L118.8 78.4 L103.3 82.6 Z" fill="url(#cubeT)"/>
 <path d="M87 78.4 L103.3 82.6 L103.3 106 L89.8 97.6 Z" fill="url(#cubeL)"/>
 <path d="M103.3 82.6 L118.8 78.4 L117 97.6 L103.3 106 Z" fill="url(#cubeR)"/>
 <path d="M88.4 80.2 L96 82 Q101.6 85 101.8 92 L101.8 102.6 L91 96.4 Z" fill="#55585c"/>
 <path d="M104.8 84 L113.6 81.4 L117.4 80.4 L115.8 96.8 L104.8 103.4 Z" fill="#5c5f63"/>
 <path d="M96 77.6 L110 77.6 Q116.6 81 117.6 88 L112 82 L100 81.6 Z" fill="#f4f5f6"/>
 <path d="M91.9 87.2 L96.9 88.6 L96.9 96.4 L91.9 94 Z" fill="#e6e9ee"/>
 <path d="M108.7 88 L113.8 86.4 L113.8 94 L108.7 96.6 Z" fill="#f2f4f6"/>
 <path d="M95 99.6 L103.3 104.6 L111 100 L103.3 106 Z" fill="#dfe6ee"/>
 <rect x="87.3" y="96.5" width="9.6" height="9.2" fill="#fff"/>
 <path d="M89.4 103.8 L94 99.2 M90.8 98.6 L94.8 98.6 L94.8 102.6" stroke="#000" stroke-width="1.5" fill="none"/>
</svg>
<div class="abs" style="left:36px;top:69px;width:83px;text-align:center;color:#fff;font-size:10px;line-height:13px;letter-spacing:1.7px;font-family:'IPAGothic','Noto Sans CJK JP',sans-serif;text-shadow:1px 1px 0 #333">デザインドー<br>ル</div>
<div class="abs" style="left:126px;top:51px;font-size:21px;line-height:30px;color:#8d1717;font-weight:500;white-space:nowrap"><span class="ar">←</span>图标长这样</div>

</div>
<!-- viewport borders -->
<div class="abs" style="left:28px;top:41px;width:1px;height:694px;background:#8f96a4"></div>

<!-- ===== left toolbars ===== -->
<svg class="abs" style="left:6px;top:44px" width="24" height="100" viewBox="6 44 24 100">
 <g stroke="#3a3a3a" stroke-width="1"><line x1="9" y1="46.5" x2="27" y2="46.5"/><line x1="9" y1="71.5" x2="27" y2="71.5"/><line x1="9" y1="96.5" x2="27" y2="96.5"/><line x1="9" y1="121.5" x2="27" y2="121.5"/></g>
 <g fill="#cfcfcf">
  <!-- camera -->
  <circle cx="16.5" cy="51.5" r="3.3"/><circle cx="22.8" cy="51.5" r="3.3"/>
  <rect x="13.5" y="53.5" width="12.5" height="7.5" rx="1"/>
  <path d="M13.5 57 L10 54 L10 60.5 Z"/>
  <path d="M17 61 L14.5 64.5 L16 64.5 L19.5 61 L20 61 L23.5 64.5 L25 64.5 L22.5 61 Z"/>
  <!-- film -->
  <rect x="10" y="73.5" width="16.5" height="15.5"/>
  <!-- cube -->
  <path d="M18.2 98 L26 101.8 L18.2 105.6 L10.4 101.8 Z"/>
  <path d="M10 103 L17.6 106.8 L17.6 114.2 L10 110.4 Z"/>
  <path d="M26.4 103 L18.8 106.8 L18.8 114.2 L26.4 110.4 Z"/>
  <!-- panes -->
  <path d="M12 124 L17.4 124 L17.4 130 L10.6 130 Z"/><path d="M19 124 L24.4 124 L25.8 130 L19 130 Z"/>
  <path d="M10.4 131.6 L17.4 131.6 L17.4 138.4 L9.6 138.4 Z"/><path d="M19 131.6 L26 131.6 L26.8 138.4 L19 138.4 Z"/>
 </g>
 <g fill="#2a2a2a"><circle cx="16.5" cy="51.5" r="1.2"/><circle cx="22.8" cy="51.5" r="1.2"/><rect x="16" y="55.5" width="7.5" height="3.5"/></g>
 <g stroke="#2a2a2a" stroke-width="1.4" stroke-dasharray="1.5 1.3"><line x1="10.5" y1="75" x2="26.5" y2="75"/><line x1="10.5" y1="87.5" x2="26.5" y2="87.5"/></g>
</svg>
<svg class="abs" style="left:6px;top:634px" width="24" height="98" viewBox="6 634 24 98">
 <g stroke="#3a3a3a" stroke-width="1"><line x1="9" y1="635.5" x2="27" y2="635.5"/><line x1="9" y1="660.5" x2="27" y2="660.5"/><line x1="9" y1="685.5" x2="27" y2="685.5"/><line x1="9" y1="710.5" x2="27" y2="710.5"/></g>
 <g fill="none" stroke="#cdcdcd" stroke-width="2.2">
  <path d="M20.8 640 A6 6 0 1 1 13.5 647.6"/>
  <circle cx="16" cy="693.5" r="5.6" stroke-width="1.9"/>
  <path d="M20 698 L26.5 703.5" stroke-width="2.4"/>
  <rect x="9.6" y="714.2" width="17" height="12" rx="1.6" stroke-width="1.7"/>
  <ellipse cx="18.1" cy="720.2" rx="5.6" ry="5.2" stroke-width="1.7"/>
 </g>
 <g fill="#cdcdcd">
  <path d="M9.4 645.2 L16.6 643.4 L14.4 650.6 Z"/>
  <path d="M18 661.4 L21.8 665.8 L19.4 665.8 L19.4 668.8 L22.4 668.8 L22.4 666.4 L26.8 670.2 L22.4 674 L22.4 671.6 L19.4 671.6 L19.4 674.6 L21.8 674.6 L18 679 L14.2 674.6 L16.6 674.6 L16.6 671.6 L13.6 671.6 L13.6 674 L9.2 670.2 L13.6 666.4 L13.6 668.8 L16.6 668.8 L16.6 665.8 L14.2 665.8 Z"/>
 </g>
</svg>

<!-- ===== right panel ===== -->
<div class="lbl" style="left:846px;top:24px">对象列表</div>
<div class="hline" style="left:846px;top:35px;width:270px"></div>
<div class="frame" style="left:843px;top:38px;width:276px;height:111px"></div>
<div class="panel" style="left:845px;top:40px;width:272px;height:107px;background:linear-gradient(to bottom,#7d766f 0,#6a635c 35%,#4a4540 60%,#171513 88%,#050505 100%);box-shadow:inset 0 1px 0 rgba(255,255,255,.18)"></div>
<div class="abs" style="left:872px;top:41px;width:1px;height:105px;background:linear-gradient(to bottom,#a8a29b,#8a847d 60%,#55504b)"></div>
<div class="abs" style="left:949px;top:41px;width:1px;height:105px;background:linear-gradient(to bottom,#a8a29b,#8a847d 60%,#55504b)"></div>
<div class="abs" style="left:847.5px;top:48.8px;width:265.5px;height:28.6px;border:1.6px solid #dba01f;border-radius:5px;box-sizing:border-box"></div>
<div class="ptxt" style="left:878px;top:56px;font-size:11.5px;font-family:'Liberation Sans','Noto Sans CJK JP',sans-serif">モデル</div>
<div class="ptxt" style="left:878px;top:86.5px;font-size:11.5px;font-family:'Liberation Sans','Noto Sans CJK JP',sans-serif">ボックス</div>
<svg class="abs" style="left:845px;top:40px" width="272" height="107" viewBox="845 40 272 107">
 <!-- eye icons -->
 <g fill="none" stroke="#d6d6d6">
  <circle cx="859.1" cy="62.9" r="7.6" stroke-width="1.3"/><circle cx="859.1" cy="62.9" r="4.5" stroke-width="1.3"/>
  <circle cx="859.1" cy="93.4" r="7.6" stroke-width="1.3"/><circle cx="859.1" cy="93.4" r="4.5" stroke-width="1.3"/>
 </g>
 <g fill="#d6d6d6"><circle cx="858.7" cy="63.3" r="3.1"/><circle cx="858.7" cy="93.8" r="3.1"/></g>
 <g fill="#69625b"><circle cx="860.4" cy="61.4" r="1.5"/></g><g fill="#5d5751"><circle cx="860.4" cy="91.9" r="1.5"/></g>
 <!-- pose icon (orange) -->
 <circle cx="966.5" cy="63" r="12" fill="#d9991a"/>
 <circle cx="966.5" cy="63" r="10.6" fill="none" stroke="#8a5f10" stroke-width="1"/>
 <g fill="#7a5412"><circle cx="966.5" cy="55.5" r="3.3"/><path d="M958 58.5 L962.5 58.5 Q966.5 62.5 970.5 58.5 L975 58.5 L976.5 63.5 L972 64.5 L972 73 L961 73 L961 64.5 L956.5 63.5 Z"/></g>
 <!-- rotate icon -->
 <g fill="#d8d8d8">
  <rect x="992.4" y="51.5" width="2.2" height="17.5"/>
  <path d="M994 51.5 L1003.6 57 L994 62.6 Z"/>
 </g>
 <path d="M982.6 66.6 Q982 73.4 993.6 73.4 Q1005.4 73.2 1005.6 65.6" fill="none" stroke="#d8d8d8" stroke-width="3.4"/>
 <path d="M979.6 68.6 L982.8 62.4 L986.8 68.2 Z" fill="#d8d8d8"/>
 <!-- zoom icon -->
 <circle cx="1017.5" cy="59.8" r="8" fill="#57524c" stroke="#d8d8d8" stroke-width="1.7"/>
 <circle cx="1017.5" cy="59.8" r="5.9" fill="none" stroke="#a8a4a0" stroke-width=".7"/>
 <path d="M1013.2 59.8 h8.6 M1017.5 55.5 v8.6" stroke="#d8d8d8" stroke-width="3"/>
 <path d="M1024 66.6 L1030.8 73" stroke="#dcdcdc" stroke-width="3.6" stroke-linecap="round"/>
 <!-- structure icon -->
 <rect x="1035.4" y="51.2" width="15.4" height="15.6" fill="#d8d8d8"/>
 <circle cx="1051.6" cy="66.8" r="7.9" fill="#d8d8d8" stroke="#4a4540" stroke-width="1"/>
 <path d="M1041.6 56.8 L1051.8 66.8 M1046.2 68.6 L1053 68.2 L1053.2 61.6" stroke="#3a3632" stroke-width="2.1" fill="none"/>
 <!-- hand icon -->
 <circle cx="1074.6" cy="62.6" r="12.2" fill="#d8d8d8"/>
 <g stroke="#4a4540" stroke-width="2.3" stroke-linecap="round" fill="none"><path d="M1070.4 70.6 L1065.6 62.2"/><path d="M1072.4 68 L1069.8 57.2"/><path d="M1075.2 67.2 L1075.2 53.4"/><path d="M1078 68 L1080.6 56"/><path d="M1080 70 L1084.8 60.2"/></g>
 <path d="M1068.6 69.6 Q1075 64.6 1081.6 69.2 Q1081 73.6 1077.6 74.6 L1072.4 74.6 Q1069 73.4 1068.6 69.6 Z" fill="#4a4540"/>
 <!-- box icon -->
 <path d="M966.4 80.8 L977.4 86.9 L977.4 98.8 L966.4 105 L955.8 98.8 L955.8 86.9 Z" fill="#3e3a36" stroke="#dadada" stroke-width="1.4" stroke-linejoin="round"/>
 <g fill="#dcdcdc"><path d="M966.4 83.8 L972.8 87.1 L966.4 90.4 L960.2 87.1 Z"/><path d="M958 90.4 L965 94 L965 101.8 L958 98 Z"/><path d="M968 94 L975.2 90.4 L975.2 98 L968 101.8 Z"/></g>
</svg>

<div class="lbl" style="left:846px;top:155px">操作面板</div>
<div class="hline" style="left:846px;top:165px;width:270px"></div>
<div class="ptxt" style="left:856px;top:177px;font-size:11px;font-family:'Liberation Sans','Noto Sans CJK JP',sans-serif">ポーズタグ</div>

<!-- pose panel -->
<div class="frame" style="left:876px;top:201px;width:210px;height:208px"></div>
<div class="panel" style="left:880px;top:205px;width:202px;height:199px;background:linear-gradient(to bottom,#7c766e 0,#68625b 20%,#514b46 45%,#2c2926 70%,#0c0b0a 92%,#030303 100%);box-shadow:inset 0 1px 0 rgba(255,255,255,.25)">
 <div class="abs" style="left:0;top:27px;width:202px;height:1px;background:#2e2a27"></div>
 <div class="abs" style="left:0;top:28px;width:202px;height:1px;background:rgba(255,255,255,.10)"></div>
 <div class="radio" style="left:3.5px;top:7.5px"></div>
 <div class="ptxt" style="left:18px;top:7.5px">肩膀联锁</div>
</div>
<svg class="abs" style="left:880px;top:205px" width="202" height="199" viewBox="880 205 202 199">
 <g fill="#dadada">
  <!-- neck piece -->
  <path d="M973.4 247.4 Q981 245.6 988.8 247.4 L993 269.6 Q993.4 271.6 991 271.6 L971 271.6 Q968.6 271.6 969.2 269.6 Z"/>
  <!-- shirt -->
  <path d="M973.6 288.4 Q981 291.6 988.4 288.4 L997 294.2 L993.6 299.8 L989.2 297.4 L990.2 313 L971.8 313 L972.8 297.4 L968.4 299.8 L965 294.2 Z"/>
  <!-- shorts -->
  <rect x="971.4" y="326.8" width="19.8" height="3.6" rx=".6"/>
  <path d="M971.6 331.6 L991 331.6 L996.8 347.6 L982.4 347.6 L981.2 343 L980 347.6 L965.4 347.6 Z"/>
  <path d="M965 349 L980 349.6 L980 356 L965.4 354.2 Z"/><path d="M982.4 349.6 L997.2 349 L996.8 354.2 L982.4 356 Z"/>
  <!-- shoes -->
  <path d="M964.6 368.8 Q964.2 367 970.8 367 Q977.6 367 977.2 369.4 L977.6 388 Q977.6 391 973.2 392.8 L958 398 Q948.4 399.6 945 396.2 Q943.4 392.8 946.6 390 Q958.6 383.6 964.6 373.6 Z"/>
  <path d="M998.8 368.8 Q999.2 367 992.6 367 Q985.8 367 986.2 369.4 L985.8 388 Q985.8 391 990.2 392.8 L1005.4 398 Q1015 399.6 1018.4 396.2 Q1020 392.8 1016.8 390 Q1004.8 383.6 998.8 373.6 Z"/>
  <!-- gloves -->
  <g id="glv">
   <path d="M930.6 309.6 Q938 311.6 946 309.6 L947 313.6 Q938.4 316 930 313.6 Z"/>
   <path d="M931.4 308 Q928.6 302.8 925.8 299 Q924.4 296.4 926.6 295.4 Q928.4 294.8 930.4 297.4 L932.6 300.2 L929.8 291.6 Q929.2 288.6 931.4 288.2 Q933.4 287.8 934.6 290.6 L937 297.6 L936.8 287.8 Q937 285.2 939.2 285.2 Q941.4 285.4 941.6 288 L942 298 L944.4 290.4 Q945.4 287.8 947.4 288.4 Q949.4 289.2 948.8 292 L946.4 301.6 L950.4 298.2 Q952.8 296.6 954 298.2 Q954.8 299.8 952.8 301.8 Q948 305 945.6 308.2 Q938 310.2 931.4 308 Z"/>
  </g>
  <use href="#glv" transform="translate(1961.8 0) scale(-1 1)"/>
 </g>
 <g stroke="#3a3632" stroke-width="1" fill="none">
  <path d="M946 391.6 Q960 394.4 977.4 387"/><path d="M1017.4 391.6 Q1003.4 394.4 986 387"/>
  <path d="M968.4 299.8 L965 294.2 M993.6 299.8 L997 294.2" stroke-width="0"/>
 </g>
</svg>

<!-- second group -->
<div class="frame" style="left:876px;top:416px;width:210px;height:118px"></div>
<div class="panel" style="left:880px;top:420px;width:202px;height:110px;overflow:hidden;background:linear-gradient(to bottom,#7f7870 0,#6e6861 25%,#5a544e 48%,#3a3632 70%,#141210 88%,#030303 100%)">
 <div class="abs" style="left:0;top:0;width:202px;height:1px;background:rgba(255,255,255,.3)"></div>
 <div class="abs" style="left:67px;top:0;width:1px;height:28px;background:rgba(0,0,0,.28)"></div>
 <div class="abs" style="left:68px;top:0;width:1px;height:28px;background:rgba(255,255,255,.12)"></div>
 <div class="abs" style="left:135px;top:0;width:1px;height:28px;background:rgba(0,0,0,.28)"></div>
 <div class="abs" style="left:136px;top:0;width:1px;height:28px;background:rgba(255,255,255,.12)"></div>
 <div class="radio" style="left:3.5px;top:7px"></div><div class="ptxt" style="left:21px;top:7px">腕</div>
 <div class="radio" style="left:70.5px;top:7px"></div><div class="ptxt" style="left:88px;top:7px">脚</div>
 <div class="radio" style="left:138.5px;top:7px"></div><div class="ptxt" style="left:156px;top:7px">背骨</div>
 <div class="abs" style="left:0;top:27px;width:202px;height:1px;background:rgba(0,0,0,.5)"></div>
 <div class="btn" style="top:28px;height:28px;line-height:28px">左右反转</div>
 <div class="btn" style="top:56px;height:28px;line-height:28px">对称（左<span class="ar">→</span>右）</div>
 <div class="btn" style="top:84px;height:26px;line-height:27px;border-bottom:none">对称（右<span class="ar">→</span>左）</div>
</div>

<!-- reset -->
<div class="frame" style="left:876px;top:541px;width:210px;height:32px"></div>
<div class="panel" style="left:880px;top:545px;width:202px;height:23px;background:linear-gradient(to bottom,#7f7870 0,#5a544e 40%,#2a2724 80%,#141210 100%);box-shadow:inset 0 1px 0 rgba(255,255,255,.3);color:#d0d0d0;font-size:11.5px;line-height:26px;text-align:center;font-family:'Liberation Sans','Noto Sans CJK JP',sans-serif;letter-spacing:0">リセット</div>

<div class="red" style="left:532px;top:93.5px;font-size:18.75px;line-height:26px"><span class="ar">←</span> 核心就是模型本身和右边这一堆 <span class="ar">→</span></div>
<div class="red" style="left:41px;top:672.5px;font-size:18.85px;line-height:21px"><span class="ar">←</span> 基本视角操作在这里<br><span style="margin-left:25px">不过还是用鼠标右键+滚轮更方便</span></div>
<!-- ===== red annotations over right panel ===== -->
<svg class="abs" style="left:780px;top:0" width="345" height="150" viewBox="780 0 345 150">
 <g stroke="#fff" stroke-width="3.2" stroke-linecap="round" stroke-opacity=".9">
  <line x1="802.4" y1="22" x2="954.5" y2="60.5"/><line x1="893.6" y1="23.6" x2="993.3" y2="54"/><line x1="985" y1="28.5" x2="1013.6" y2="54"/><line x1="1047.4" y1="25" x2="1047.4" y2="50.7"/><line x1="1108.2" y1="23.6" x2="1089.6" y2="55.7"/><line x1="969.6" y1="105" x2="976" y2="121.5"/>
 </g>
 <g stroke="#e8151c" stroke-width="1.45" stroke-linecap="round">
  <line x1="802.4" y1="22" x2="954.5" y2="60.5"/><line x1="893.6" y1="23.6" x2="993.3" y2="54"/><line x1="985" y1="28.5" x2="1013.6" y2="54"/><line x1="1047.4" y1="25" x2="1047.4" y2="50.7"/><line x1="1108.2" y1="23.6" x2="1089.6" y2="55.7"/><line x1="969.6" y1="105" x2="976" y2="121.5"/>
 </g>
</svg>
<div class="red" style="left:754px;top:2px;font-size:14.5px;line-height:20px">姿势调节、整体旋转、身体部件调节、模型结构调整、手</div>
<div class="red" style="left:950px;top:129px;font-size:14.5px;line-height:20px">额外模型</div>

</body>
</html>
